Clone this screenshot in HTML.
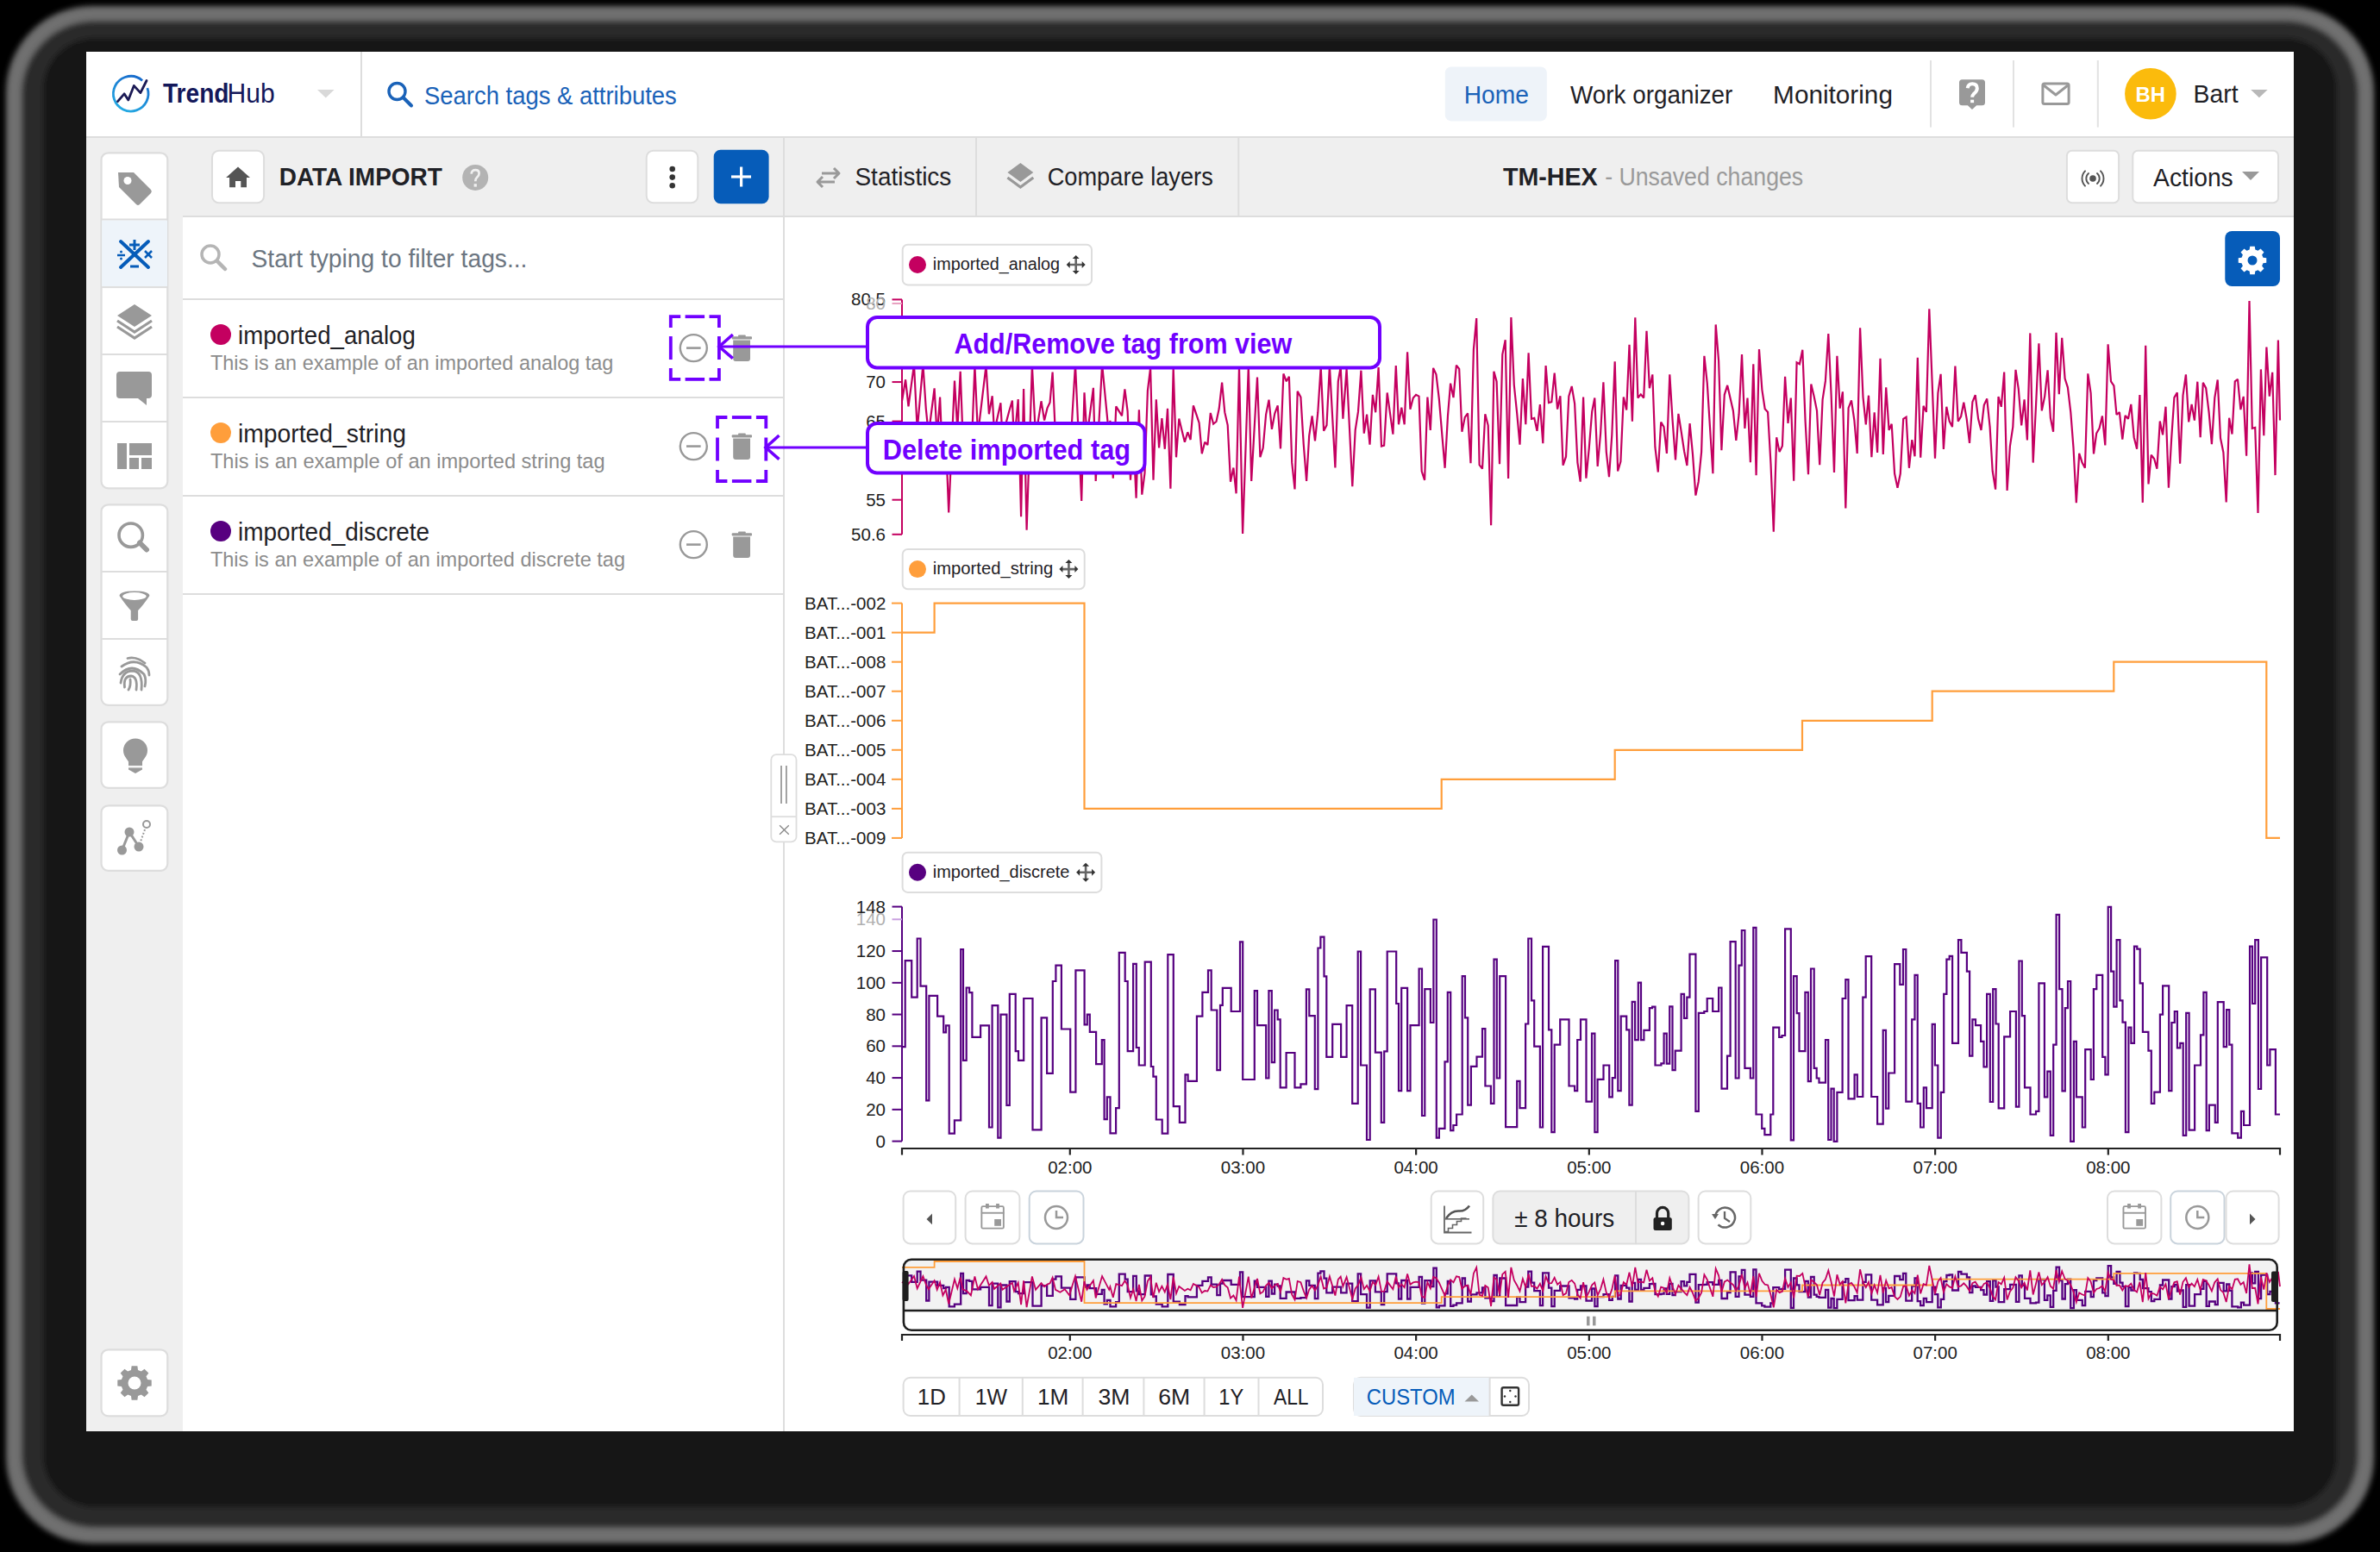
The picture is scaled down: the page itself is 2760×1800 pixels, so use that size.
<!DOCTYPE html>
<html><head><meta charset="utf-8"><title>TrendHub</title>
<style>html,body{margin:0;padding:0;background:#000;width:2760px;height:1800px;overflow:hidden}svg{display:block}</style>
</head><body><svg width="2760" height="1800" viewBox="0 0 2760 1800" font-family="&quot;Liberation Sans&quot;, sans-serif"><rect x="0.00" y="0.00" width="2760.00" height="1800.00" rx="0" fill="#000" />
<defs><filter id="blur" x="-5%" y="-5%" width="110%" height="110%"><feGaussianBlur stdDeviation="3"/></filter><linearGradient id="lg" x1="0" y1="1" x2="1" y2="0"><stop offset="0" stop-color="#27b4e6"/><stop offset="1" stop-color="#1560c8"/></linearGradient></defs>
<g filter="url(#blur)">
<rect x="7.00" y="7.00" width="2746.00" height="1783.00" rx="100" fill="#707070" />
<rect x="25.00" y="24.00" width="2710.00" height="1748.00" rx="85" fill="#2a2a2a" />
<rect x="50.00" y="44.00" width="2660.00" height="1704.00" rx="60" fill="#151515" />
</g>
<rect x="100.00" y="60.00" width="2560.00" height="1600.00" rx="0" fill="#ffffff" />
<rect x="100.00" y="158.00" width="2560.00" height="2.00" rx="0" fill="#dddddd" />
<rect x="418.00" y="60.00" width="2.00" height="98.00" rx="0" fill="#dddddd" />
<circle cx="151.7" cy="108.7" r="20.3" fill="none" stroke="url(#lg)" stroke-width="2.8" stroke-dasharray="116.2 11.3" transform="rotate(-19 151.7 108.7)"/>
<path d="M136.5,117.6 L144.1,108.8 L148.8,115.9 L155.3,99.4 L162.9,107.6 L170,93.5" fill="none" stroke="#1b1a55" stroke-width="2.8" stroke-linejoin="round" stroke-linecap="round"/>
<text x="188.92" y="119.40" font-size="31" fill="#14185a" font-weight="bold" textLength="76.59" lengthAdjust="spacingAndGlyphs" >Trend</text>
<text x="263.49" y="119.40" font-size="31" fill="#14185a" font-weight="normal" textLength="55.19" lengthAdjust="spacingAndGlyphs" >Hub</text>
<path d="M368,104 L387.6,104 L377.8,113.5 Z" fill="#d9d9d9"  />
<circle cx="460.50" cy="106.00" r="9.50" fill="none" stroke="#1a62b8" stroke-width="3.4" />
<line x1="467.50" y1="113.00" x2="477.00" y2="122.50" stroke="#1a62b8" stroke-width="4" stroke-linecap="round"/>
<text x="492.00" y="120.90" font-size="29" fill="#1a62b8" font-weight="normal" textLength="292.82" lengthAdjust="spacingAndGlyphs" >Search tags &amp; attributes</text>
<rect x="1675.80" y="77.50" width="118.00" height="62.90" rx="7" fill="#eef3f9" />
<text x="1697.75" y="120.00" font-size="29" fill="#1a62b8" font-weight="normal" textLength="75.17" lengthAdjust="spacingAndGlyphs" >Home</text>
<text x="1821.10" y="120.00" font-size="29" fill="#1f2126" font-weight="normal" textLength="188.26" lengthAdjust="spacingAndGlyphs" >Work organizer</text>
<text x="2056.12" y="120.00" font-size="29" fill="#1f2126" font-weight="normal" textLength="138.85" lengthAdjust="spacingAndGlyphs" >Monitoring</text>
<rect x="2238.00" y="70.00" width="2.00" height="77.60" rx="0" fill="#e2e2e2" />
<rect x="2334.00" y="70.00" width="2.00" height="77.60" rx="0" fill="#e2e2e2" />
<rect x="2431.80" y="70.00" width="2.00" height="77.60" rx="0" fill="#e2e2e2" />
<path d="M2275.5,92.2 h23 a3.5,3.5 0 0 1 3.5,3.5 v23 a3.5,3.5 0 0 1 -3.5,3.5 h-6.4 l-5.1,4.7 l-5.1,-4.7 h-6.4 a3.5,3.5 0 0 1 -3.5,-3.5 v-23 a3.5,3.5 0 0 1 3.5,-3.5 z" fill="#999999"  />
<path d="M2281.7,102.3 Q2282.5,97.3 2287.1,97.3 Q2292.8,97.3 2292.8,102.6 Q2292.8,105.5 2289.6,108.3 Q2287.1,110.5 2287.1,112.8" fill="none" stroke="#fff" stroke-width="4" />
<rect x="2285.10" y="115.70" width="4.00" height="3.50" rx="0" fill="#fff" />
<rect x="2368.90" y="97.10" width="30.20" height="23.40" rx="2" fill="none" stroke="#999999" stroke-width="3" />
<path d="M2370,99 L2384,110 L2398,99" fill="none" stroke="#999999" stroke-width="3" stroke-linejoin="round"/>
<circle cx="2493.90" cy="108.70" r="29.80" fill="#fbbb0c"  />
<text x="2476.57" y="117.60" font-size="24" fill="#fff" font-weight="bold" textLength="34.41" lengthAdjust="spacingAndGlyphs" >BH</text>
<text x="2543.53" y="119.00" font-size="29" fill="#1f2126" font-weight="normal" textLength="52.01" lengthAdjust="spacingAndGlyphs" >Bart</text>
<path d="M2610.2,104 L2629.6,104 L2619.9,113.2 Z" fill="#b8b8b8"  />
<rect x="100.00" y="160.00" width="112.00" height="1500.00" rx="0" fill="#efefef" />
<rect x="117.50" y="177.30" width="76.80" height="389.00" rx="8" fill="#fff" stroke="#dddddd" stroke-width="2.2" />
<rect x="118.20" y="255.50" width="75.80" height="76.60" rx="0" fill="#eef4fa" />
<rect x="118.20" y="253.50" width="75.80" height="2.00" rx="0" fill="#dddddd" />
<rect x="118.20" y="332.10" width="75.80" height="2.00" rx="0" fill="#dddddd" />
<rect x="118.20" y="410.00" width="75.80" height="2.00" rx="0" fill="#dddddd" />
<rect x="118.20" y="488.00" width="75.80" height="2.00" rx="0" fill="#dddddd" />
<rect x="117.50" y="585.30" width="76.80" height="232.50" rx="8" fill="#fff" stroke="#dddddd" stroke-width="2.2" />
<rect x="118.20" y="662.00" width="75.80" height="2.00" rx="0" fill="#dddddd" />
<rect x="118.20" y="740.00" width="75.80" height="2.00" rx="0" fill="#dddddd" />
<rect x="117.50" y="837.30" width="76.80" height="76.50" rx="8" fill="#fff" stroke="#dddddd" stroke-width="2.2" />
<rect x="117.50" y="934.30" width="76.80" height="75.50" rx="8" fill="#fff" stroke="#dddddd" stroke-width="2.2" />
<rect x="117.50" y="1565.30" width="76.80" height="77.00" rx="8" fill="#fff" stroke="#dddddd" stroke-width="2.2" />
<path d="M137,200 h18 l20,20 a3,3 0 0 1 0,4 l-13,13 a3,3 0 0 1 -4,0 l-20,-20 l-1,-17 z" fill="#999999"  />
<circle cx="148.00" cy="209.50" r="4.50" fill="#fff"  />
<line x1="140.00" y1="280.00" x2="172.00" y2="310.00" stroke="#065cb9" stroke-width="4" stroke-linecap="round"/>
<line x1="172.00" y1="280.00" x2="140.00" y2="310.00" stroke="#065cb9" stroke-width="4" stroke-linecap="round"/>
<line x1="156.00" y1="278.00" x2="156.00" y2="290.00" stroke="#065cb9" stroke-width="3" />
<line x1="150.00" y1="284.00" x2="162.00" y2="284.00" stroke="#065cb9" stroke-width="3" />
<line x1="151.00" y1="309.00" x2="161.00" y2="309.00" stroke="#065cb9" stroke-width="3" />
<line x1="136.00" y1="296.00" x2="145.00" y2="296.00" stroke="#065cb9" stroke-width="2.5" />
<circle cx="140.50" cy="292.00" r="1.50" fill="#065cb9"  />
<circle cx="140.50" cy="300.00" r="1.50" fill="#065cb9"  />
<line x1="168.00" y1="291.00" x2="176.00" y2="299.00" stroke="#065cb9" stroke-width="2.5" />
<line x1="176.00" y1="291.00" x2="168.00" y2="299.00" stroke="#065cb9" stroke-width="2.5" />
<path d="M156,353 L176,366 L156,379 L136,366 Z" fill="#999999"  />
<path d="M136,372 L156,385 L176,372" fill="none" stroke="#999999" stroke-width="3.2" />
<path d="M136,379 L156,392 L176,379" fill="none" stroke="#999999" stroke-width="3.2" />
<path d="M139,431 h33 a4,4 0 0 1 4,4 v23 a4,4 0 0 1 -4,4 h-2 v8 l-10,-8 h-21 a4,4 0 0 1 -4,-4 v-23 a4,4 0 0 1 4,-4 z" fill="#999999"  />
<rect x="136.00" y="514.00" width="11.00" height="30.00" rx="0" fill="#999999" />
<rect x="150.00" y="514.00" width="26.00" height="14.00" rx="0" fill="#999999" />
<rect x="150.00" y="531.00" width="11.00" height="13.00" rx="0" fill="#999999" />
<rect x="164.00" y="531.00" width="12.00" height="13.00" rx="0" fill="#999999" />
<circle cx="151.70" cy="620.70" r="13.70" fill="none" stroke="#999999" stroke-width="3.6" />
<line x1="162.00" y1="629.50" x2="170.00" y2="637.50" stroke="#999999" stroke-width="6" stroke-linecap="round"/>
<path d="M138.5,691 Q138.5,685.4 156,685.4 Q173.4,685.4 173.4,691 Q166,702 160.1,708 V718 a2,2 0 0 1 -2,2 h-4.4 a2,2 0 0 1 -2,-2 V708 Q146,702 138.5,691 Z" fill="#999999"  />
<ellipse cx="155.9" cy="691.5" rx="13.7" ry="4.4" fill="#fff"/>
<path d="M148,763.5 Q158,761 168,769" fill="none" stroke="#999999" stroke-width="2.8" stroke-linecap="round"/>
<path d="M141,773 Q156,762 170,774 Q173,778 173,783" fill="none" stroke="#999999" stroke-width="2.8" stroke-linecap="round"/>
<path d="M139,782 Q153,768 167,782 Q170,788 168,796" fill="none" stroke="#999999" stroke-width="2.8" stroke-linecap="round"/>
<path d="M140,792 Q142,778 154,778 Q166,779 164,800" fill="none" stroke="#999999" stroke-width="2.8" stroke-linecap="round"/>
<path d="M144.5,797 Q143,784 152,784 Q160,785 158,800" fill="none" stroke="#999999" stroke-width="2.8" stroke-linecap="round"/>
<path d="M151,788 Q152,795 149,800" fill="none" stroke="#999999" stroke-width="2.8" stroke-linecap="round"/>
<path d="M157,856.5 a14,14 0 0 1 14,14 c0,6 -4,9 -6,13 v6 h-16 v-6 c-2,-4 -6,-7 -6,-13 a14,14 0 0 1 14,-14 z" fill="#999999"  />
<path d="M149,890.5 h16 v2 l-8,4.5 l-8,-4.5 z" fill="#999999"  />
<rect x="147.00" y="888.00" width="20.00" height="1.60" rx="0" fill="#fff" />
<circle cx="141.50" cy="986.00" r="5.50" fill="#999999"  />
<circle cx="150.00" cy="965.00" r="5.50" fill="#999999"  />
<circle cx="161.00" cy="982.00" r="5.50" fill="#999999"  />
<path d="M141.5,986 L150,965 L161,982" fill="none" stroke="#999999" stroke-width="3" />
<circle cx="170.00" cy="956.00" r="4.00" fill="none" stroke="#999999" stroke-width="2" />
<path d="M162,979 L168,962" fill="none" stroke="#999999" stroke-width="2" stroke-dasharray="2 2"/>
<path d="M171.08,1599.99 L175.71,1600.62 L175.71,1607.38 L171.08,1608.01 L169.50,1611.82 L172.33,1615.55 L167.55,1620.33 L163.82,1617.50 L160.01,1619.08 L159.38,1623.71 L152.62,1623.71 L151.99,1619.08 L148.18,1617.50 L144.45,1620.33 L139.67,1615.55 L142.50,1611.82 L140.92,1608.01 L136.29,1607.38 L136.29,1600.62 L140.92,1599.99 L142.50,1596.18 L139.67,1592.45 L144.45,1587.67 L148.18,1590.50 L151.99,1588.92 L152.62,1584.29 L159.38,1584.29 L160.01,1588.92 L163.82,1590.50 L167.55,1587.67 L172.33,1592.45 L169.50,1596.18 Z" fill="#999999"  />
<circle cx="156.00" cy="1604.00" r="7.50" fill="#fff"  />
<rect x="212.00" y="160.00" width="696.00" height="91.00" rx="0" fill="#efefef" />
<rect x="212.00" y="250.00" width="696.00" height="2.00" rx="0" fill="#dddddd" />
<rect x="908.00" y="160.00" width="2.00" height="1500.00" rx="0" fill="#dddddd" />
<rect x="246.00" y="174.70" width="60.10" height="60.60" rx="8" fill="#fff" stroke="#dddddd" stroke-width="2" />
<path d="M276,193.4 L290,205.9 L286,205.9 L286,217.3 L279.3,217.3 L279.3,210 L273,210 L273,217.3 L266.1,217.3 L266.1,205.9 L262.1,205.9 Z" fill="#555"  />
<text x="323.73" y="215.10" font-size="30" fill="#1f2126" font-weight="bold" textLength="189.19" lengthAdjust="spacingAndGlyphs" >DATA IMPORT</text>
<circle cx="551.20" cy="205.90" r="15.00" fill="#b3b3b3"  />
<path d="M546.6,201.6 Q547.2,197.1 551.3,197.1 Q555.6,197.1 555.6,201 Q555.6,203.6 553.3,205.6 Q551.3,207.4 551.3,210.2" fill="none" stroke="#f0f0f0" stroke-width="2.7" />
<rect x="549.60" y="213.20" width="3.30" height="3.40" rx="0" fill="#f0f0f0" />
<rect x="749.70" y="174.70" width="59.60" height="60.60" rx="8" fill="#fff" stroke="#dddddd" stroke-width="2" />
<circle cx="779.70" cy="196.00" r="3.30" fill="#333"  />
<circle cx="779.70" cy="205.60" r="3.30" fill="#333"  />
<circle cx="779.70" cy="215.20" r="3.30" fill="#333"  />
<rect x="827.70" y="173.70" width="63.90" height="62.60" rx="8" fill="#065cb9" />
<line x1="759.60" y1="0.00" x2="0.00" y2="0.00" stroke="none" stroke-width="0" />
<line x1="848.00" y1="205.00" x2="871.00" y2="205.00" stroke="#fff" stroke-width="3.2" />
<line x1="859.60" y1="193.50" x2="859.60" y2="216.50" stroke="#fff" stroke-width="3.2" />
<circle cx="244.00" cy="295.00" r="10.00" fill="none" stroke="#b5b5b5" stroke-width="3.5" />
<line x1="251.50" y1="302.50" x2="261.00" y2="312.00" stroke="#b5b5b5" stroke-width="4.5" stroke-linecap="round"/>
<text x="291.47" y="310.40" font-size="29" fill="#6c7681" font-weight="normal" textLength="320.01" lengthAdjust="spacingAndGlyphs" >Start typing to filter tags...</text>
<rect x="212.00" y="346.00" width="696.00" height="2.00" rx="0" fill="#dddddd" />
<circle cx="256.00" cy="388.00" r="12.00" fill="#c40060"  />
<text x="276.04" y="399.30" font-size="29" fill="#1f2126" font-weight="normal" textLength="205.81" lengthAdjust="spacingAndGlyphs" >imported_analog</text>
<text x="243.93" y="429.00" font-size="24.5" fill="#8c8c8c" font-weight="normal" textLength="467.38" lengthAdjust="spacingAndGlyphs" >This is an example of an imported analog tag</text>
<circle cx="804.30" cy="403.60" r="15.50" fill="none" stroke="#999999" stroke-width="2.4" />
<line x1="796.00" y1="403.60" x2="812.60" y2="403.60" stroke="#999999" stroke-width="2.6" />
<rect x="848.70" y="390.20" width="23.30" height="3.40" rx="1" fill="#999999" />
<rect x="856.00" y="388.60" width="8.80" height="2.40" rx="1" fill="#999999" />
<path d="M850.2,394.6 h19.8 v21.5 a3,3 0 0 1 -3,3 h-13.8 a3,3 0 0 1 -3,-3 z" fill="#999999"  />
<rect x="212.00" y="460.00" width="696.00" height="2.00" rx="0" fill="#dddddd" />
<circle cx="256.00" cy="502.00" r="12.00" fill="#ff9e3b"  />
<text x="276.00" y="513.30" font-size="29" fill="#1f2126" font-weight="normal" textLength="194.99" lengthAdjust="spacingAndGlyphs" >imported_string</text>
<text x="243.93" y="543.00" font-size="24.5" fill="#8c8c8c" font-weight="normal" textLength="457.70" lengthAdjust="spacingAndGlyphs" >This is an example of an imported string tag</text>
<circle cx="804.30" cy="517.60" r="15.50" fill="none" stroke="#999999" stroke-width="2.4" />
<line x1="796.00" y1="517.60" x2="812.60" y2="517.60" stroke="#999999" stroke-width="2.6" />
<rect x="848.70" y="504.20" width="23.30" height="3.40" rx="1" fill="#999999" />
<rect x="856.00" y="502.60" width="8.80" height="2.40" rx="1" fill="#999999" />
<path d="M850.2,508.6 h19.8 v21.5 a3,3 0 0 1 -3,3 h-13.8 a3,3 0 0 1 -3,-3 z" fill="#999999"  />
<rect x="212.00" y="574.00" width="696.00" height="2.00" rx="0" fill="#dddddd" />
<circle cx="256.00" cy="616.00" r="12.00" fill="#580080"  />
<text x="276.02" y="627.30" font-size="29" fill="#1f2126" font-weight="normal" textLength="221.99" lengthAdjust="spacingAndGlyphs" >imported_discrete</text>
<text x="243.93" y="657.00" font-size="24.5" fill="#8c8c8c" font-weight="normal" textLength="481.09" lengthAdjust="spacingAndGlyphs" >This is an example of an imported discrete tag</text>
<circle cx="804.30" cy="631.60" r="15.50" fill="none" stroke="#999999" stroke-width="2.4" />
<line x1="796.00" y1="631.60" x2="812.60" y2="631.60" stroke="#999999" stroke-width="2.6" />
<rect x="848.70" y="618.20" width="23.30" height="3.40" rx="1" fill="#999999" />
<rect x="856.00" y="616.60" width="8.80" height="2.40" rx="1" fill="#999999" />
<path d="M850.2,622.6 h19.8 v21.5 a3,3 0 0 1 -3,3 h-13.8 a3,3 0 0 1 -3,-3 z" fill="#999999"  />
<rect x="212.00" y="688.00" width="696.00" height="2.00" rx="0" fill="#dddddd" />
<rect x="910.00" y="160.00" width="1750.00" height="91.00" rx="0" fill="#efefef" />
<rect x="910.00" y="250.00" width="1750.00" height="2.00" rx="0" fill="#dddddd" />
<rect x="1131.00" y="160.00" width="2.00" height="90.00" rx="0" fill="#dddddd" />
<rect x="1435.30" y="160.00" width="2.00" height="90.00" rx="0" fill="#dddddd" />
<path d="M953,201 h20 M967,195 l6,6 l-6,6" fill="none" stroke="#999999" stroke-width="3" stroke-linejoin="round"/>
<path d="M968,211 h-20 M954,205 l-6,6 l6,6" fill="none" stroke="#999999" stroke-width="3" stroke-linejoin="round"/>
<text x="991.48" y="215.30" font-size="29" fill="#1f2126" font-weight="normal" textLength="111.86" lengthAdjust="spacingAndGlyphs" >Statistics</text>
<path d="M1183.4,189 L1198.3,200 L1183.4,211 L1168.4,200 Z" fill="#999999"  />
<path d="M1168.4,206 L1183.4,217 L1198.3,206" fill="none" stroke="#999999" stroke-width="3.2" />
<text x="1214.64" y="215.30" font-size="29" fill="#1f2126" font-weight="normal" textLength="192.18" lengthAdjust="spacingAndGlyphs" >Compare layers</text>
<text x="1742.91" y="214.90" font-size="30" fill="#1f2126" font-weight="bold" textLength="109.79" lengthAdjust="spacingAndGlyphs" >TM-HEX</text>
<text x="1861.13" y="214.90" font-size="29" fill="#9a9a9a" font-weight="normal" textLength="230.07" lengthAdjust="spacingAndGlyphs" >- Unsaved changes</text>
<rect x="2396.90" y="174.70" width="60.20" height="60.60" rx="6" fill="#fff" stroke="#dddddd" stroke-width="2" />
<circle cx="2427.00" cy="207.00" r="3.80" fill="#555"  />
<path d="M2422.05,201.10 A7.7,7.7 0 0 0 2422.05,212.90" fill="none" stroke="#555" stroke-width="1.9" stroke-linecap="round"/>
<path d="M2431.95,201.10 A7.7,7.7 0 0 1 2431.95,212.90" fill="none" stroke="#555" stroke-width="1.9" stroke-linecap="round"/>
<path d="M2418.01,198.32 A12.5,12.5 0 0 0 2418.01,215.68" fill="none" stroke="#555" stroke-width="1.9" stroke-linecap="round"/>
<path d="M2435.99,198.32 A12.5,12.5 0 0 1 2435.99,215.68" fill="none" stroke="#555" stroke-width="1.9" stroke-linecap="round"/>
<rect x="2473.30" y="174.70" width="168.70" height="60.60" rx="6" fill="#fff" stroke="#dddddd" stroke-width="2" />
<text x="2497.10" y="215.80" font-size="29" fill="#1f2126" font-weight="normal" textLength="92.65" lengthAdjust="spacingAndGlyphs" >Actions</text>
<path d="M2600,199 L2620,199 L2610,209 Z" fill="#999"  />
<rect x="2580.30" y="268.00" width="63.70" height="64.00" rx="8" fill="#065cb9" />
<path d="M2624.44,298.69 L2628.26,299.21 L2628.26,304.79 L2624.44,305.31 L2623.13,308.46 L2625.47,311.53 L2621.53,315.47 L2618.46,313.13 L2615.31,314.44 L2614.79,318.26 L2609.21,318.26 L2608.69,314.44 L2605.54,313.13 L2602.47,315.47 L2598.53,311.53 L2600.87,308.46 L2599.56,305.31 L2595.74,304.79 L2595.74,299.21 L2599.56,298.69 L2600.87,295.54 L2598.53,292.47 L2602.47,288.53 L2605.54,290.87 L2608.69,289.56 L2609.21,285.74 L2614.79,285.74 L2615.31,289.56 L2618.46,290.87 L2621.53,288.53 L2625.47,292.47 L2623.13,295.54 Z" fill="#fff"  />
<circle cx="2612.00" cy="302.00" r="5.50" fill="#065cb9"  />
<rect x="1046.70" y="283.70" width="219.30" height="46.70" rx="6" fill="#fff" stroke="#dddddd" stroke-width="2" />
<circle cx="1064.00" cy="307.05" r="10.00" fill="#c40060"  />
<text x="1081.81" y="313.05" font-size="20.5" fill="#1f2126" font-weight="normal" textLength="147.30" lengthAdjust="spacingAndGlyphs" >imported_analog</text>
<path d="M1238.7,307.04999999999995 h18 M1247.7,298.04999999999995 v18" fill="none" stroke="#666" stroke-width="2.6" />
<path d="M1236.7,307.04999999999995 l4,-4 v8 z M1258.7,307.04999999999995 l-4,-4 v8 z M1247.7,296.04999999999995 l-4,4 h8 z M1247.7,318.04999999999995 l-4,-4 h8 z" fill="#333"  />
<rect x="1046.70" y="637.00" width="211.00" height="46.20" rx="6" fill="#fff" stroke="#dddddd" stroke-width="2" />
<circle cx="1064.00" cy="660.10" r="10.00" fill="#ff9e3b"  />
<text x="1081.79" y="666.10" font-size="20.5" fill="#1f2126" font-weight="normal" textLength="139.35" lengthAdjust="spacingAndGlyphs" >imported_string</text>
<path d="M1230.4,660.1 h18 M1239.4,651.1 v18" fill="none" stroke="#666" stroke-width="2.6" />
<path d="M1228.4,660.1 l4,-4 v8 z M1250.4,660.1 l-4,-4 v8 z M1239.4,649.1 l-4,4 h8 z M1239.4,671.1 l-4,-4 h8 z" fill="#333"  />
<rect x="1046.60" y="988.70" width="230.80" height="46.20" rx="6" fill="#fff" stroke="#dddddd" stroke-width="2" />
<circle cx="1064.00" cy="1011.80" r="10.00" fill="#580080"  />
<text x="1081.80" y="1017.80" font-size="20.5" fill="#1f2126" font-weight="normal" textLength="158.62" lengthAdjust="spacingAndGlyphs" >imported_discrete</text>
<path d="M1250.1000000000001,1011.8000000000001 h18 M1259.1000000000001,1002.8000000000001 v18" fill="none" stroke="#666" stroke-width="2.6" />
<path d="M1248.1000000000001,1011.8000000000001 l4,-4 v8 z M1270.1000000000001,1011.8000000000001 l-4,-4 v8 z M1259.1000000000001,1000.8000000000001 l-4,4 h8 z M1259.1000000000001,1022.8000000000001 l-4,-4 h8 z" fill="#333"  />
<line x1="1046.00" y1="347.40" x2="1046.00" y2="619.80" stroke="#c40060" stroke-width="2" />
<line x1="1034.50" y1="347.40" x2="1046.00" y2="347.40" stroke="#c40060" stroke-width="2" />
<text x="1027.00" y="354.40" font-size="20.5" fill="#222" font-weight="normal" text-anchor="end" >80.5</text>
<line x1="1034.50" y1="351.95" x2="1046.00" y2="351.95" stroke="#e8a0c0" stroke-width="2" />
<text x="1027.00" y="358.95" font-size="20.5" fill="#b0b0b0" font-weight="normal" text-anchor="end" >80</text>
<line x1="1034.50" y1="443.05" x2="1046.00" y2="443.05" stroke="#c40060" stroke-width="2" />
<text x="1027.00" y="450.05" font-size="20.5" fill="#222" font-weight="normal" text-anchor="end" >70</text>
<line x1="1034.50" y1="488.60" x2="1046.00" y2="488.60" stroke="#c40060" stroke-width="2" />
<text x="1027.00" y="495.60" font-size="20.5" fill="#222" font-weight="normal" text-anchor="end" >65</text>
<line x1="1034.50" y1="534.15" x2="1046.00" y2="534.15" stroke="#c40060" stroke-width="2" />
<text x="1027.00" y="541.15" font-size="20.5" fill="#222" font-weight="normal" text-anchor="end" >60</text>
<line x1="1034.50" y1="397.50" x2="1046.00" y2="397.50" stroke="#c40060" stroke-width="2" />
<text x="1027.00" y="404.50" font-size="20.5" fill="#222" font-weight="normal" text-anchor="end" >75</text>
<line x1="1034.50" y1="579.70" x2="1046.00" y2="579.70" stroke="#c40060" stroke-width="2" />
<text x="1027.00" y="586.70" font-size="20.5" fill="#222" font-weight="normal" text-anchor="end" >55</text>
<line x1="1034.50" y1="619.79" x2="1046.00" y2="619.79" stroke="#c40060" stroke-width="2" />
<text x="1027.00" y="626.79" font-size="20.5" fill="#222" font-weight="normal" text-anchor="end" >50.6</text>
<path d="M1046.1,464.6 L1050.1,440.3 L1053.5,471.4 L1060.0,422.7 L1063.7,498.5 L1070.4,422.7 L1073.8,474.1 L1076.8,503.9 L1083.6,450.4 L1086.7,506.6 L1090.1,460.6 L1093.4,541.8 L1096.8,506.6 L1100.2,594.5 L1107.0,441.6 L1110.3,498.5 L1113.7,430.8 L1116.4,503.9 L1121.2,514.7 L1125.9,541.8 L1130.4,424.1 L1134.0,503.9 L1143.5,424.1 L1146.9,480.2 L1150.7,459.2 L1153.0,501.2 L1160.4,467.3 L1162.4,506.6 L1170.3,476.8 L1173.9,464.6 L1176.0,514.7 L1180.7,463.0 L1184.1,599.2 L1187.1,451.1 L1190.6,614.8 L1196.9,424.1 L1201.0,506.6 L1207.5,465.3 L1211.1,487.6 L1214.5,473.4 L1217.6,466.7 L1220.6,431.5 L1224.0,506.6 L1229.4,522.8 L1234.8,503.9 L1240.2,541.8 L1243.6,479.5 L1247.0,422.7 L1254.2,581.0 L1257.5,455.2 L1260.5,506.6 L1267.9,449.8 L1270.7,558.0 L1278.1,422.7 L1286.2,506.6 L1287.4,487.7 L1290.8,554.7 L1294.3,471.4 L1297.7,476.8 L1301.0,482.3 L1304.4,451.4 L1307.6,476.8 L1311.0,556.7 L1314.2,503.9 L1317.6,577.7 L1320.9,475.2 L1324.3,573.6 L1327.5,548.6 L1330.9,453.2 L1334.1,426.8 L1337.5,556.7 L1340.8,463.3 L1344.1,519.5 L1347.4,485.2 L1350.8,520.8 L1354.0,473.7 L1357.4,566.8 L1360.7,426.8 L1364.0,530.3 L1367.3,485.6 L1370.7,499.8 L1373.9,512.7 L1377.3,501.2 L1380.6,510.0 L1383.9,470.3 L1387.2,480.2 L1390.6,490.4 L1393.8,526.2 L1397.2,512.7 L1400.4,516.1 L1403.8,478.9 L1407.1,491.7 L1410.5,489.0 L1413.7,474.1 L1417.1,443.7 L1420.3,478.2 L1423.7,493.1 L1427.0,558.7 L1430.4,542.5 L1433.6,572.3 L1437.0,425.4 L1441.1,618.9 L1447.8,425.4 L1451.2,558.0 L1458.0,437.6 L1461.4,530.3 L1464.7,519.5 L1468.1,480.9 L1471.5,463.6 L1474.9,497.8 L1478.3,479.5 L1481.7,470.3 L1485.0,520.4 L1488.4,433.5 L1491.8,442.3 L1494.9,436.9 L1498.2,536.4 L1501.5,567.5 L1504.7,453.8 L1508.4,460.6 L1511.7,514.7 L1515.1,558.0 L1518.2,505.3 L1521.6,482.5 L1525.0,511.4 L1528.3,478.2 L1531.7,425.4 L1535.1,499.8 L1538.5,493.1 L1541.9,424.1 L1548.4,542.5 L1551.8,442.3 L1554.7,425.4 L1557.4,485.6 L1561.6,427.9 L1568.3,564.3 L1571.7,498.9 L1575.0,477.4 L1578.4,429.7 L1581.8,502.6 L1585.1,480.6 L1588.5,515.7 L1591.9,457.8 L1595.2,478.3 L1598.6,426.0 L1602.0,517.6 L1605.1,516.6 L1608.7,455.5 L1612.1,480.2 L1615.4,503.6 L1618.8,424.1 L1622.0,492.3 L1625.3,472.7 L1628.7,492.3 L1632.1,408.2 L1635.4,474.6 L1638.8,461.5 L1642.1,457.8 L1645.5,459.6 L1648.7,546.5 L1652.1,556.8 L1655.4,460.6 L1658.8,498.9 L1662.1,426.9 L1665.5,434.4 L1668.9,463.4 L1672.2,502.6 L1675.6,542.8 L1679.0,482.1 L1682.1,444.7 L1685.5,461.1 L1688.9,423.7 L1692.2,427.9 L1695.4,500.7 L1698.8,483.9 L1702.1,479.3 L1705.5,537.2 L1708.9,405.4 L1712.2,369.0 L1715.6,539.1 L1719.0,543.7 L1722.3,480.2 L1725.7,493.3 L1729.1,609.2 L1732.4,430.7 L1735.6,442.4 L1739.0,538.1 L1742.3,411.0 L1745.7,394.2 L1749.1,555.0 L1752.4,368.0 L1755.8,446.5 L1759.2,479.3 L1762.5,515.7 L1765.9,439.1 L1769.3,492.3 L1772.6,409.2 L1776.0,485.8 L1779.3,484.9 L1782.5,499.8 L1785.9,469.0 L1789.3,514.2 L1792.6,424.1 L1796.0,467.1 L1799.3,466.2 L1802.7,432.5 L1806.1,474.6 L1809.4,459.3 L1812.6,539.6 L1816.0,529.7 L1819.3,459.6 L1822.7,448.0 L1826.1,468.0 L1829.4,536.3 L1832.7,558.7 L1836.1,460.6 L1839.4,554.6 L1842.8,519.4 L1846.2,477.4 L1849.3,461.5 L1852.7,540.9 L1856.1,502.6 L1859.4,443.2 L1862.8,524.1 L1866.0,553.1 L1869.3,504.5 L1872.7,419.4 L1876.1,546.5 L1879.4,535.3 L1882.8,460.6 L1886.2,475.5 L1889.5,399.8 L1892.9,488.6 L1896.3,368.4 L1899.4,461.5 L1902.8,457.4 L1906.2,461.5 L1909.5,383.9 L1912.9,450.3 L1916.3,434.4 L1919.4,518.5 L1922.8,547.5 L1926.2,489.5 L1929.5,495.1 L1932.9,526.0 L1936.3,434.4 L1939.6,487.7 L1943.0,533.5 L1946.4,479.8 L1949.7,500.7 L1953.1,523.2 L1956.4,540.0 L1959.6,491.0 L1963.0,526.9 L1966.4,574.6 L1969.7,558.7 L1973.1,524.1 L1976.4,412.9 L1979.8,444.7 L1983.2,498.9 L1986.4,549.3 L1989.7,376.4 L1993.1,418.5 L1996.4,522.2 L1999.8,457.8 L2003.2,446.9 L2006.5,461.5 L2009.9,476.4 L2013.3,511.0 L2016.6,480.2 L2020.0,411.0 L2023.4,497.0 L2026.5,461.5 L2029.9,536.3 L2033.3,422.2 L2036.6,551.2 L2040.0,405.0 L2043.4,452.1 L2046.7,474.2 L2050.1,477.9 L2053.5,538.1 L2056.8,616.6 L2060.2,507.3 L2063.6,524.1 L2066.9,517.2 L2070.1,436.8 L2073.5,491.0 L2076.8,461.5 L2080.2,557.8 L2083.6,420.4 L2086.9,422.2 L2090.3,405.8 L2093.6,488.6 L2097.0,550.3 L2100.3,445.6 L2103.6,459.6 L2107.0,476.4 L2110.2,539.1 L2113.6,463.4 L2116.9,441.9 L2120.3,387.1 L2123.6,457.8 L2127.0,548.0 L2130.4,412.9 L2133.7,473.6 L2136.9,454.4 L2140.3,589.5 L2143.6,473.1 L2147.0,464.3 L2150.4,487.7 L2153.7,526.0 L2157.1,380.2 L2160.5,460.6 L2163.8,492.3 L2167.0,458.7 L2170.4,530.3 L2173.7,478.3 L2177.1,525.0 L2180.5,415.7 L2183.8,526.9 L2187.2,449.3 L2190.6,498.9 L2193.7,491.8 L2197.1,549.3 L2200.5,565.8 L2203.8,549.3 L2207.2,485.8 L2210.6,483.6 L2213.9,542.8 L2217.3,510.1 L2220.5,529.2 L2223.8,414.8 L2227.2,530.7 L2230.6,470.8 L2233.9,477.9 L2237.3,358.3 L2240.7,444.7 L2244.0,531.6 L2247.4,455.9 L2250.6,433.8 L2253.9,520.9 L2257.3,471.8 L2260.7,488.6 L2264.0,495.1 L2267.4,424.5 L2270.7,488.6 L2274.1,483.0 L2277.3,466.7 L2280.7,485.8 L2284.0,513.8 L2287.4,466.2 L2290.7,458.1 L2294.1,485.8 L2297.5,498.9 L2300.8,469.9 L2304.2,462.4 L2307.6,495.1 L2310.7,546.5 L2314.1,567.7 L2317.5,460.0 L2320.8,471.8 L2324.2,431.6 L2327.6,569.0 L2330.9,517.6 L2334.3,495.1 L2337.5,428.8 L2340.8,451.2 L2344.2,493.3 L2347.6,463.4 L2350.9,510.5 L2354.3,386.4 L2357.7,536.6 L2361.0,470.8 L2364.4,398.3 L2367.8,476.4 L2371.2,459.6 L2374.6,429.3 L2377.9,484.8 L2381.1,500.7 L2384.5,385.8 L2387.8,457.3 L2391.2,391.9 L2394.6,439.0 L2397.9,449.3 L2401.3,478.2 L2404.5,519.3 L2407.8,583.2 L2411.2,525.9 L2414.5,536.2 L2417.9,542.7 L2421.3,433.4 L2424.6,455.8 L2428.0,526.4 L2431.2,502.5 L2434.5,496.9 L2437.9,482.4 L2441.3,516.5 L2444.6,399.4 L2448.0,442.4 L2451.4,447.4 L2454.5,481.0 L2457.9,478.2 L2461.3,509.6 L2464.6,482.0 L2468.0,485.7 L2471.3,468.9 L2474.7,507.2 L2478.1,520.8 L2481.4,458.1 L2484.8,582.9 L2488.2,400.7 L2491.5,561.4 L2494.7,527.7 L2498.1,532.0 L2501.4,543.6 L2504.8,488.5 L2508.1,504.4 L2511.5,471.7 L2514.9,565.7 L2518.2,508.1 L2521.4,461.1 L2524.8,455.4 L2528.1,537.6 L2531.5,458.6 L2534.9,434.3 L2538.2,489.4 L2541.6,468.9 L2544.9,487.6 L2548.3,442.7 L2551.7,507.2 L2554.8,443.7 L2558.2,450.2 L2561.6,478.2 L2564.9,515.2 L2568.3,461.4 L2571.7,440.5 L2575.0,508.1 L2578.4,524.9 L2581.7,582.5 L2585.1,484.8 L2588.5,503.5 L2591.8,442.4 L2595.0,439.9 L2598.4,475.1 L2601.7,459.9 L2605.1,528.7 L2608.5,349.0 L2611.8,496.9 L2615.2,496.0 L2618.5,595.0 L2621.9,428.4 L2625.3,505.3 L2628.4,402.6 L2631.8,459.6 L2635.2,431.9 L2638.5,551.1 L2641.9,394.5 L2644.0,487.6" fill="none" stroke="#c40060" stroke-width="2.2" stroke-linejoin="miter" stroke-miterlimit="2"/>
<line x1="1046.00" y1="699.60" x2="1046.00" y2="971.90" stroke="#ff9e3b" stroke-width="2" />
<line x1="1034.00" y1="699.60" x2="1046.00" y2="699.60" stroke="#ff9e3b" stroke-width="2" />
<text x="1027.30" y="706.60" font-size="20.5" fill="#222" font-weight="normal" text-anchor="end" >BAT...-002</text>
<line x1="1034.00" y1="733.64" x2="1046.00" y2="733.64" stroke="#ff9e3b" stroke-width="2" />
<text x="1027.30" y="740.64" font-size="20.5" fill="#222" font-weight="normal" text-anchor="end" >BAT...-001</text>
<line x1="1034.00" y1="767.68" x2="1046.00" y2="767.68" stroke="#ff9e3b" stroke-width="2" />
<text x="1027.30" y="774.68" font-size="20.5" fill="#222" font-weight="normal" text-anchor="end" >BAT...-008</text>
<line x1="1034.00" y1="801.72" x2="1046.00" y2="801.72" stroke="#ff9e3b" stroke-width="2" />
<text x="1027.30" y="808.72" font-size="20.5" fill="#222" font-weight="normal" text-anchor="end" >BAT...-007</text>
<line x1="1034.00" y1="835.76" x2="1046.00" y2="835.76" stroke="#ff9e3b" stroke-width="2" />
<text x="1027.30" y="842.76" font-size="20.5" fill="#222" font-weight="normal" text-anchor="end" >BAT...-006</text>
<line x1="1034.00" y1="869.80" x2="1046.00" y2="869.80" stroke="#ff9e3b" stroke-width="2" />
<text x="1027.30" y="876.80" font-size="20.5" fill="#222" font-weight="normal" text-anchor="end" >BAT...-005</text>
<line x1="1034.00" y1="903.84" x2="1046.00" y2="903.84" stroke="#ff9e3b" stroke-width="2" />
<text x="1027.30" y="910.84" font-size="20.5" fill="#222" font-weight="normal" text-anchor="end" >BAT...-004</text>
<line x1="1034.00" y1="937.88" x2="1046.00" y2="937.88" stroke="#ff9e3b" stroke-width="2" />
<text x="1027.30" y="944.88" font-size="20.5" fill="#222" font-weight="normal" text-anchor="end" >BAT...-003</text>
<line x1="1034.00" y1="971.92" x2="1046.00" y2="971.92" stroke="#ff9e3b" stroke-width="2" />
<text x="1027.30" y="978.92" font-size="20.5" fill="#222" font-weight="normal" text-anchor="end" >BAT...-009</text>
<path d="M1046.0,733.6 L1083.6,733.6 L1083.6,699.6 L1257.5,699.6 L1257.5,937.9 L1671.7,937.9 L1671.7,903.8 L1872.7,903.8 L1872.7,869.8 L2090.0,869.8 L2090.0,835.8 L2240.7,835.8 L2240.7,801.7 L2451.3,801.7 L2451.3,767.7 L2628.3,767.7 L2628.3,971.9 L2644.0,971.9" fill="none" stroke="#ff9e3b" stroke-width="2.2" />
<line x1="1046.00" y1="1051.60" x2="1046.00" y2="1323.60" stroke="#560080" stroke-width="2" />
<line x1="1034.50" y1="1051.58" x2="1046.00" y2="1051.58" stroke="#560080" stroke-width="2" />
<text x="1027.00" y="1058.58" font-size="20.5" fill="#222" font-weight="normal" text-anchor="end" >148</text>
<line x1="1034.50" y1="1066.28" x2="1046.00" y2="1066.28" stroke="#c9a0e0" stroke-width="2" />
<text x="1027.00" y="1073.28" font-size="20.5" fill="#b0b0b0" font-weight="normal" text-anchor="end" >140</text>
<line x1="1034.50" y1="1103.04" x2="1046.00" y2="1103.04" stroke="#560080" stroke-width="2" />
<text x="1027.00" y="1110.04" font-size="20.5" fill="#222" font-weight="normal" text-anchor="end" >120</text>
<line x1="1034.50" y1="1139.80" x2="1046.00" y2="1139.80" stroke="#560080" stroke-width="2" />
<text x="1027.00" y="1146.80" font-size="20.5" fill="#222" font-weight="normal" text-anchor="end" >100</text>
<line x1="1034.50" y1="1176.56" x2="1046.00" y2="1176.56" stroke="#560080" stroke-width="2" />
<text x="1027.00" y="1183.56" font-size="20.5" fill="#222" font-weight="normal" text-anchor="end" >80</text>
<line x1="1034.50" y1="1213.32" x2="1046.00" y2="1213.32" stroke="#560080" stroke-width="2" />
<text x="1027.00" y="1220.32" font-size="20.5" fill="#222" font-weight="normal" text-anchor="end" >60</text>
<line x1="1034.50" y1="1250.08" x2="1046.00" y2="1250.08" stroke="#560080" stroke-width="2" />
<text x="1027.00" y="1257.08" font-size="20.5" fill="#222" font-weight="normal" text-anchor="end" >40</text>
<line x1="1034.50" y1="1286.84" x2="1046.00" y2="1286.84" stroke="#560080" stroke-width="2" />
<text x="1027.00" y="1293.84" font-size="20.5" fill="#222" font-weight="normal" text-anchor="end" >20</text>
<line x1="1034.50" y1="1323.60" x2="1046.00" y2="1323.60" stroke="#560080" stroke-width="2" />
<text x="1027.00" y="1330.60" font-size="20.5" fill="#222" font-weight="normal" text-anchor="end" >0</text>
<path d="M1046,1214.1 H1049.7 V1114.1 H1057.2 V1156.7 H1063.7 V1088.5 H1067.5 V1143.6 H1074.2 V1276.3 H1077.4 V1154.8 H1087.1 V1178.6 H1094.2 V1197.3 H1097.0 V1189.4 H1100.7 V1314.6 H1106.9 V1299.4 H1114.2 V1101.0 H1117.0 V1229.9 H1120.7 V1145.5 H1124.1 V1151.1 H1127.4 V1202.9 H1137.1 V1189.4 H1147.0 V1307.5 H1150.6 V1166.1 H1157.3 V1319.6 H1160.5 V1176.7 H1167.4 V1281.9 H1170.8 V1152.8 H1177.7 V1219.1 H1181.0 V1229.9 H1187.2 V1158.0 H1197.5 V1310.3 H1207.6 V1180.4 H1214.1 V1244.9 H1220.8 V1138.0 H1224.4 V1119.7 H1230.9 V1193.5 H1241.2 V1266.7 H1247.4 V1125.3 H1257.6 V1188.3 H1260.8 V1176.7 H1263.8 V1196.9 H1271.1 V1234.1 H1277.8 V1206.2 H1280.6 V1298.1 H1283.8 V1272.3 H1287.5 V1314.4 H1294.1 V1285.1 H1297.8 V1104.8 H1304.7 V1138.0 H1307.7 V1219.1 H1314.1 V1117.9 H1317.8 V1215.0 H1320.8 V1235.5 H1327.7 V1115.6 H1334.8 V1237.0 H1337.4 V1248.6 H1340.8 V1298.5 H1347.7 V1314.6 H1354.3 V1107.2 H1360.8 V1283.2 H1367.9 V1301.9 H1374.5 V1246.4 H1377.6 V1253.9 H1387.9 V1178.6 H1394.4 V1150.9 H1401.0 V1125.3 H1404.7 V1171.5 H1411.3 V1241.2 H1415.0 V1165.9 H1417.8 V1145.9 H1427.7 V1173.0 H1438.0 V1092.3 H1441.2 V1252.0 H1454.8 V1149.2 H1458.0 V1189.2 H1468.2 V1250.5 H1471.4 V1149.2 H1474.8 V1232.2 H1478.1 V1171.5 H1481.7 V1182.3 H1484.7 V1261.3 H1491.6 V1221.0 H1501.5 V1261.3 H1508.4 V1257.4 H1514.9 V1147.4 H1518.3 V1178.2 H1524.8 V1263.2 H1528.4 V1099.5 H1531.4 V1086.7 H1535.5 V1132.4 H1538.3 V1225.8 H1545.2 V1187.9 H1555.1 V1225.8 H1561.6 V1166.1 H1568.2 V1279.8 H1574.7 V1103.5 H1578.1 V1235.5 H1585.0 V1322.0 H1588.7 V1147.4 H1594.9 V1220.6 H1601.8 V1301.9 H1605.2 V1219.3 H1608.7 V1103.5 H1619.2 V1164.0 H1622.0 V1265.1 H1625.2 V1145.9 H1632.1 V1265.1 H1635.5 V1189.2 H1645.6 V1123.5 H1649.0 V1294.0 H1652.3 V1147.2 H1658.9 V1186.0 H1662.4 V1066.5 H1665.8 V1319.6 H1668.9 V1308.8 H1675.5 V1231.3 H1678.8 V1150.9 H1682.2 V1311.2 H1685.4 V1305.0 H1689.1 V1292.5 H1695.7 V1132.2 H1699.0 V1180.4 H1702.2 V1281.7 H1705.9 V1236.9 H1712.5 V1225.6 H1719.0 V1193.1 H1722.4 V1259.5 H1728.9 V1279.8 H1732.5 V1112.6 H1735.8 V1250.5 H1739.2 V1132.2 H1746.1 V1307.1 H1759.2 V1253.9 H1762.5 V1285.1 H1769.1 V1187.5 H1772.3 V1088.5 H1776.0 V1160.3 H1779.2 V1213.7 H1785.9 V1307.5 H1789.1 V1097.9 H1796.0 V1194.4 H1799.3 V1313.1 H1802.7 V1211.6 H1809.2 V1182.3 H1819.5 V1259.5 H1826.1 V1265.1 H1829.2 V1206.0 H1833.0 V1182.3 H1839.5 V1277.6 H1846.0 V1198.7 H1849.4 V1313.1 H1852.6 V1251.8 H1859.5 V1235.5 H1866.2 V1272.3 H1869.8 V1250.1 H1873.1 V1114.1 H1876.3 V1265.1 H1879.7 V1178.6 H1886.2 V1194.4 H1889.4 V1281.7 H1892.7 V1161.8 H1896.1 V1206.2 H1899.8 V1139.7 H1903.0 V1206.2 H1906.4 V1194.8 H1912.9 V1169.2 H1916.1 V1167.7 H1919.5 V1235.5 H1926.4 V1233.3 H1929.6 V1198.7 H1932.8 V1233.7 H1936.2 V1167.4 H1939.5 V1241.2 H1942.7 V1218.7 H1949.6 V1152.8 H1953.0 V1180.8 H1956.3 V1156.7 H1959.5 V1106.6 H1966.4 V1288.8 H1969.8 V1174.8 H1976.3 V1173.0 H1979.7 V1158.0 H1986.2 V1173.0 H1993.1 V1145.5 H1996.5 V1262.6 H2003.0 V1224.7 H2006.6 V1092.1 H2012.7 V1250.5 H2016.5 V1119.7 H2019.8 V1079.0 H2023.4 V1238.9 H2029.9 V1250.5 H2033.3 V1075.8 H2036.5 V1292.5 H2043.2 V1308.8 H2046.4 V1316.2 H2053.3 V1292.5 H2056.3 V1191.6 H2063.2 V1202.9 H2066.5 V1201.0 H2070.1 V1077.3 H2076.8 V1322.4 H2080.0 V1132.2 H2083.7 V1175.2 H2086.5 V1219.1 H2093.4 V1150.9 H2096.8 V1254.2 H2100.0 V1123.5 H2103.7 V1238.9 H2106.7 V1250.5 H2109.5 V1255.7 H2117.0 V1206.0 H2120.2 V1322.0 H2123.5 V1262.6 H2126.7 V1323.9 H2130.4 V1266.9 H2136.6 V1158.0 H2140.3 V1136.2 H2143.5 V1274.4 H2150.6 V1246.4 H2153.8 V1272.0 H2160.3 V1156.7 H2163.7 V1109.1 H2170.2 V1272.0 H2177.1 V1303.7 H2183.7 V1194.8 H2187.0 V1285.6 H2190.2 V1244.5 H2197.1 V1118.2 H2203.3 V1141.8 H2207.0 V1101.0 H2210.3 V1277.6 H2217.2 V1182.3 H2220.5 V1130.9 H2223.7 V1279.8 H2227.1 V1307.5 H2230.8 V1261.3 H2234.0 V1285.1 H2240.7 V1187.9 H2243.9 V1235.5 H2247.3 V1319.6 H2250.8 V1266.9 H2254.2 V1152.8 H2257.4 V1112.6 H2260.7 V1108.9 H2264.1 V1209.8 H2271.0 V1090.2 H2274.4 V1104.8 H2280.9 V1126.6 H2284.1 V1224.7 H2287.4 V1182.3 H2291.0 V1189.2 H2297.1 V1207.9 H2300.5 V1237.4 H2304.1 V1152.8 H2307.8 V1278.0 H2311.2 V1147.2 H2314.5 V1187.5 H2317.7 V1285.4 H2324.2 V1202.3 H2331.1 V1173.0 H2337.9 V1283.6 H2341.4 V1114.5 H2344.8 V1178.2 H2348.0 V1261.3 H2354.5 V1292.5 H2361.0 V1288.8 H2364.4 V1140.3 H2370.9 V1272.3 H2374.3 V1242.6 H2377.8 V1316.8 H2381.2 V1211.6 H2384.6 V1060.9 H2388.1 V1147.2 H2391.5 V1265.4 H2394.8 V1169.2 H2398.0 V1138.0 H2401.2 V1323.9 H2404.9 V1207.9 H2407.9 V1272.3 H2414.8 V1307.5 H2418.2 V1217.2 H2424.7 V1252.0 H2427.9 V1147.2 H2431.3 V1130.9 H2438.2 V1225.8 H2441.4 V1246.4 H2444.7 V1051.9 H2448.1 V1126.6 H2451.3 V1167.7 H2454.6 V1090.2 H2458.4 V1160.3 H2461.5 V1185.7 H2464.9 V1313.1 H2468.4 V1191.6 H2471.4 V1209.8 H2475.0 V1097.7 H2478.3 V1100.7 H2481.7 V1140.3 H2484.9 V1196.9 H2491.4 V1218.7 H2494.8 V1279.8 H2498.3 V1266.7 H2504.9 V1176.7 H2508.1 V1143.4 H2515.2 V1265.1 H2518.4 V1186.0 H2521.8 V1173.0 H2524.9 V1215.4 H2528.3 V1209.8 H2531.7 V1316.8 H2535.2 V1174.8 H2538.6 V1310.6 H2545.1 V1235.5 H2552.0 V1200.4 H2555.4 V1150.9 H2558.7 V1311.2 H2561.9 V1281.7 H2568.8 V1301.9 H2571.8 V1162.1 H2578.7 V1214.1 H2582.1 V1171.1 H2585.3 V1211.6 H2588.4 V1314.4 H2595.2 V1319.6 H2598.9 V1288.8 H2602.1 V1305.0 H2609.0 V1097.7 H2612.0 V1164.0 H2615.2 V1090.2 H2618.9 V1263.0 H2622.1 V1110.4 H2629.2 V1235.5 H2632.4 V1217.2 H2638.9 V1292.5 H2643.6 V1292.5 H2644" fill="none" stroke="#560080" stroke-width="2.2" />
<line x1="1046.00" y1="1332.00" x2="2645.00" y2="1332.00" stroke="#222" stroke-width="2.2" />
<line x1="1046.00" y1="1331.00" x2="1046.00" y2="1339.50" stroke="#222" stroke-width="2.2" />
<line x1="2644.00" y1="1331.00" x2="2644.00" y2="1339.50" stroke="#222" stroke-width="2.2" />
<line x1="1240.80" y1="1331.00" x2="1240.80" y2="1339.50" stroke="#222" stroke-width="2.2" />
<text x="1240.80" y="1360.80" font-size="20.5" fill="#222" font-weight="normal" text-anchor="middle" >02:00</text>
<line x1="1441.47" y1="1331.00" x2="1441.47" y2="1339.50" stroke="#222" stroke-width="2.2" />
<text x="1441.47" y="1360.80" font-size="20.5" fill="#222" font-weight="normal" text-anchor="middle" >03:00</text>
<line x1="1642.14" y1="1331.00" x2="1642.14" y2="1339.50" stroke="#222" stroke-width="2.2" />
<text x="1642.14" y="1360.80" font-size="20.5" fill="#222" font-weight="normal" text-anchor="middle" >04:00</text>
<line x1="1842.81" y1="1331.00" x2="1842.81" y2="1339.50" stroke="#222" stroke-width="2.2" />
<text x="1842.81" y="1360.80" font-size="20.5" fill="#222" font-weight="normal" text-anchor="middle" >05:00</text>
<line x1="2043.48" y1="1331.00" x2="2043.48" y2="1339.50" stroke="#222" stroke-width="2.2" />
<text x="2043.48" y="1360.80" font-size="20.5" fill="#222" font-weight="normal" text-anchor="middle" >06:00</text>
<line x1="2244.15" y1="1331.00" x2="2244.15" y2="1339.50" stroke="#222" stroke-width="2.2" />
<text x="2244.15" y="1360.80" font-size="20.5" fill="#222" font-weight="normal" text-anchor="middle" >07:00</text>
<line x1="2444.82" y1="1331.00" x2="2444.82" y2="1339.50" stroke="#222" stroke-width="2.2" />
<text x="2444.82" y="1360.80" font-size="20.5" fill="#222" font-weight="normal" text-anchor="middle" >08:00</text>
<rect x="894.30" y="875.10" width="29.20" height="101.30" rx="6" fill="#fff" stroke="#dddddd" stroke-width="1.8" />
<line x1="906.00" y1="888.00" x2="906.00" y2="932.00" stroke="#999" stroke-width="1.8" />
<line x1="911.90" y1="888.00" x2="911.90" y2="932.00" stroke="#999" stroke-width="1.8" />
<rect x="894.30" y="946.30" width="29.20" height="1.80" rx="0" fill="#dddddd" />
<line x1="904.10" y1="957.20" x2="914.80" y2="967.70" stroke="#888" stroke-width="1.3" />
<line x1="914.80" y1="957.20" x2="904.10" y2="967.70" stroke="#888" stroke-width="1.3" />
<rect x="1047.60" y="1381.50" width="60.60" height="60.90" rx="8" fill="#fff" stroke="#dddddd" stroke-width="2" />
<path d="M1074.5,1414 L1081,1407.6 L1081,1420.3 Z" fill="#555"  />
<rect x="1119.60" y="1381.50" width="62.80" height="60.90" rx="8" fill="#fff" stroke="#dddddd" stroke-width="2" />
<rect x="1138.35" y="1399.15" width="25.50" height="25.50" rx="1.5" fill="none" stroke="#999999" stroke-width="1.9" />
<rect x="1137.90" y="1405.80" width="26.50" height="1.90" rx="0" fill="#999999" />
<rect x="1143.00" y="1396.00" width="3.80" height="5.50" rx="0" fill="#999999" />
<rect x="1155.10" y="1396.00" width="3.80" height="5.50" rx="0" fill="#999999" />
<rect x="1153.20" y="1414.00" width="7.80" height="7.80" rx="0" fill="#999999" />
<rect x="1193.70" y="1381.50" width="62.80" height="60.90" rx="8" fill="#fff" stroke="#c9d3dc" stroke-width="2" />
<circle cx="1225.00" cy="1412.00" r="13.00" fill="none" stroke="#999999" stroke-width="2.5" />
<path d="M1225,1404 V1412 H1233" fill="none" stroke="#999999" stroke-width="2.5" />
<rect x="1659.70" y="1381.50" width="60.50" height="60.90" rx="8" fill="#fff" stroke="#dddddd" stroke-width="2" />
<path d="M1675,1398.5 V1429.5 H1706.5" fill="none" stroke="#666" stroke-width="1.8" />
<path d="M1677,1413 Q1683,1404 1692,1404.5 Q1699,1405 1704,1398.5" fill="none" stroke="#555" stroke-width="2.6" />
<path d="M1676,1413.8 H1704" fill="none" stroke="#666" stroke-width="1.6" />
<path d="M1676,1428.5 h3.5 v-4 h5 v-4 h5 v-4 h5 v-3.5 h6" fill="none" stroke="#666" stroke-width="1.6" />
<rect x="1731.40" y="1381.50" width="227.00" height="60.90" rx="8" fill="#efefef" stroke="#dddddd" stroke-width="2" />
<rect x="1896.00" y="1381.50" width="2.00" height="60.90" rx="0" fill="#dddddd" />
<text x="1756.16" y="1423.00" font-size="29" fill="#1f2126" font-weight="normal" textLength="116.07" lengthAdjust="spacingAndGlyphs" >± 8 hours</text>
<rect x="1917.50" y="1412.00" width="21.30" height="15.00" rx="2.5" fill="#222" />
<path d="M1921.5,1412 v-5 a6.6,6.6 0 0 1 13.2,0 v5" fill="none" stroke="#222" stroke-width="3.2" />
<circle cx="1928.10" cy="1419.00" r="2.20" fill="#fff"  />
<rect x="1969.60" y="1381.50" width="60.70" height="60.90" rx="8" fill="#fff" stroke="#dddddd" stroke-width="2" />
<path d="M1989,1412 a11.5,11.5 0 1 1 3.5,8.3" fill="none" stroke="#666" stroke-width="2.5" />
<path d="M1985,1408 L1993,1408 L1989,1414 Z" fill="#666"  />
<path d="M2000,1405 V1413 L2006,1417" fill="none" stroke="#666" stroke-width="2.3" />
<rect x="2444.00" y="1381.50" width="62.40" height="60.90" rx="8" fill="#fff" stroke="#dddddd" stroke-width="2" />
<rect x="2462.45" y="1399.15" width="25.50" height="25.50" rx="1.5" fill="none" stroke="#999999" stroke-width="1.9" />
<rect x="2462.00" y="1405.80" width="26.50" height="1.90" rx="0" fill="#999999" />
<rect x="2467.10" y="1396.00" width="3.80" height="5.50" rx="0" fill="#999999" />
<rect x="2479.20" y="1396.00" width="3.80" height="5.50" rx="0" fill="#999999" />
<rect x="2477.30" y="1414.00" width="7.80" height="7.80" rx="0" fill="#999999" />
<rect x="2517.20" y="1381.50" width="62.30" height="60.90" rx="8" fill="#fff" stroke="#c9d3dc" stroke-width="2" />
<circle cx="2548.30" cy="1412.00" r="13.00" fill="none" stroke="#999999" stroke-width="2.5" />
<path d="M2548.3,1404 V1412 H2556.3" fill="none" stroke="#999999" stroke-width="2.5" />
<rect x="2581.50" y="1381.50" width="61.10" height="60.90" rx="8" fill="#fff" stroke="#dddddd" stroke-width="2" />
<path d="M2615.5,1414 L2609,1407.6 L2609,1420.3 Z" fill="#555"  />
<rect x="1046.60" y="1459.50" width="1595.40" height="84.50" rx="9" fill="#fff" />
<path d="M1055.6,1459.5 H2633 a9,9 0 0 1 9,9 V1520 H1046.6 V1468.5 a9,9 0 0 1 9,-9 z" fill="#f2f2f2"/>
<path d="M1048,1497.3 H1049.7 V1479.3 H1057.2 V1486.9 H1063.7 V1474.7 H1067.5 V1484.6 H1074.2 V1508.5 H1077.4 V1486.6 H1087.1 V1490.9 H1094.2 V1494.2 H1097.0 V1492.8 H1100.7 V1515.4 H1106.9 V1512.6 H1114.2 V1476.9 H1117.0 V1500.1 H1120.7 V1484.9 H1124.1 V1485.9 H1127.4 V1495.3 H1137.1 V1492.8 H1147.0 V1514.1 H1150.6 V1488.6 H1157.3 V1516.3 H1160.5 V1490.5 H1167.4 V1509.5 H1170.8 V1486.2 H1177.7 V1498.2 H1181.0 V1500.1 H1187.2 V1487.2 H1197.5 V1514.6 H1207.6 V1491.2 H1214.1 V1502.8 H1220.8 V1483.6 H1224.4 V1480.3 H1230.9 V1493.6 H1241.2 V1506.8 H1247.4 V1481.3 H1257.6 V1492.6 H1260.8 V1490.5 H1263.8 V1494.2 H1271.1 V1500.9 H1277.8 V1495.9 H1280.6 V1512.4 H1283.8 V1507.8 H1287.5 V1515.3 H1294.1 V1510.1 H1297.8 V1477.6 H1304.7 V1483.6 H1307.7 V1498.2 H1314.1 V1479.9 H1317.8 V1497.4 H1320.8 V1501.1 H1327.7 V1479.5 H1334.8 V1501.4 H1337.4 V1503.5 H1340.8 V1512.5 H1347.7 V1515.4 H1354.3 V1478.0 H1360.8 V1509.7 H1367.9 V1513.1 H1374.5 V1503.1 H1377.6 V1504.4 H1387.9 V1490.9 H1394.4 V1485.9 H1401.0 V1481.3 H1404.7 V1489.6 H1411.3 V1502.1 H1415.0 V1488.6 H1417.8 V1485.0 H1427.7 V1489.9 H1438.0 V1475.3 H1441.2 V1504.1 H1454.8 V1485.6 H1458.0 V1492.8 H1468.2 V1503.8 H1471.4 V1485.6 H1474.8 V1500.5 H1478.1 V1489.6 H1481.7 V1491.5 H1484.7 V1505.8 H1491.6 V1498.5 H1501.5 V1505.8 H1508.4 V1505.1 H1514.9 V1485.3 H1518.3 V1490.8 H1524.8 V1506.1 H1528.4 V1476.6 H1531.4 V1474.3 H1535.5 V1482.6 H1538.3 V1499.4 H1545.2 V1492.6 H1555.1 V1499.4 H1561.6 V1488.6 H1568.2 V1509.1 H1574.7 V1477.3 H1578.1 V1501.1 H1585.0 V1516.7 H1588.7 V1485.3 H1594.9 V1498.4 H1601.8 V1513.1 H1605.2 V1498.2 H1608.7 V1477.3 H1619.2 V1488.3 H1622.0 V1506.5 H1625.2 V1485.0 H1632.1 V1506.5 H1635.5 V1492.8 H1645.6 V1480.9 H1649.0 V1511.7 H1652.3 V1485.2 H1658.9 V1492.2 H1662.4 V1470.7 H1665.8 V1516.3 H1668.9 V1514.3 H1675.5 V1500.4 H1678.8 V1485.9 H1682.2 V1514.8 H1685.4 V1513.7 H1689.1 V1511.4 H1695.7 V1482.5 H1699.0 V1491.2 H1702.2 V1509.5 H1705.9 V1501.4 H1712.5 V1499.4 H1719.0 V1493.5 H1722.4 V1505.4 H1728.9 V1509.1 H1732.5 V1479.0 H1735.8 V1503.8 H1739.2 V1482.5 H1746.1 V1514.0 H1759.2 V1504.4 H1762.5 V1510.1 H1769.1 V1492.5 H1772.3 V1474.7 H1776.0 V1487.6 H1779.2 V1497.2 H1785.9 V1514.1 H1789.1 V1476.3 H1796.0 V1493.7 H1799.3 V1515.1 H1802.7 V1496.8 H1809.2 V1491.5 H1819.5 V1505.4 H1826.1 V1506.5 H1829.2 V1495.8 H1833.0 V1491.5 H1839.5 V1508.7 H1846.0 V1494.5 H1849.4 V1515.1 H1852.6 V1504.1 H1859.5 V1501.1 H1866.2 V1507.8 H1869.8 V1503.8 H1873.1 V1479.3 H1876.3 V1506.5 H1879.7 V1490.9 H1886.2 V1493.7 H1889.4 V1509.5 H1892.7 V1487.8 H1896.1 V1495.9 H1899.8 V1483.9 H1903.0 V1495.9 H1906.4 V1493.8 H1912.9 V1489.2 H1916.1 V1488.9 H1919.5 V1501.1 H1926.4 V1500.7 H1929.6 V1494.5 H1932.8 V1500.8 H1936.2 V1488.9 H1939.5 V1502.1 H1942.7 V1498.1 H1949.6 V1486.2 H1953.0 V1491.3 H1956.3 V1486.9 H1959.5 V1477.9 H1966.4 V1510.7 H1969.8 V1490.2 H1976.3 V1489.9 H1979.7 V1487.2 H1986.2 V1489.9 H1993.1 V1484.9 H1996.5 V1506.0 H2003.0 V1499.2 H2006.6 V1475.3 H2012.7 V1503.8 H2016.5 V1480.3 H2019.8 V1472.9 H2023.4 V1501.7 H2029.9 V1503.8 H2033.3 V1472.4 H2036.5 V1511.4 H2043.2 V1514.3 H2046.4 V1515.7 H2053.3 V1511.4 H2056.3 V1493.2 H2063.2 V1495.3 H2066.5 V1494.9 H2070.1 V1472.6 H2076.8 V1516.8 H2080.0 V1482.5 H2083.7 V1490.3 H2086.5 V1498.2 H2093.4 V1485.9 H2096.8 V1504.5 H2100.0 V1480.9 H2103.7 V1501.7 H2106.7 V1503.8 H2109.5 V1504.8 H2117.0 V1495.8 H2120.2 V1516.7 H2123.5 V1506.0 H2126.7 V1517.1 H2130.4 V1506.8 H2136.6 V1487.2 H2140.3 V1483.2 H2143.5 V1508.1 H2150.6 V1503.1 H2153.8 V1507.7 H2160.3 V1486.9 H2163.7 V1478.4 H2170.2 V1507.7 H2177.1 V1513.4 H2183.7 V1493.8 H2187.0 V1510.2 H2190.2 V1502.8 H2197.1 V1480.0 H2203.3 V1484.2 H2207.0 V1476.9 H2210.3 V1508.7 H2217.2 V1491.5 H2220.5 V1482.3 H2223.7 V1509.1 H2227.1 V1514.1 H2230.8 V1505.8 H2234.0 V1510.1 H2240.7 V1492.6 H2243.9 V1501.1 H2247.3 V1516.3 H2250.8 V1506.8 H2254.2 V1486.2 H2257.4 V1479.0 H2260.7 V1478.3 H2264.1 V1496.5 H2271.0 V1475.0 H2274.4 V1477.6 H2280.9 V1481.5 H2284.1 V1499.2 H2287.4 V1491.5 H2291.0 V1492.8 H2297.1 V1496.2 H2300.5 V1501.5 H2304.1 V1486.2 H2307.8 V1508.8 H2311.2 V1485.2 H2314.5 V1492.5 H2317.7 V1510.1 H2324.2 V1495.1 H2331.1 V1489.9 H2337.9 V1509.8 H2341.4 V1479.3 H2344.8 V1490.8 H2348.0 V1505.8 H2354.5 V1511.4 H2361.0 V1510.7 H2364.4 V1484.0 H2370.9 V1507.8 H2374.3 V1502.4 H2377.8 V1515.8 H2381.2 V1496.8 H2384.6 V1469.7 H2388.1 V1485.2 H2391.5 V1506.5 H2394.8 V1489.2 H2398.0 V1483.6 H2401.2 V1517.1 H2404.9 V1496.2 H2407.9 V1507.8 H2414.8 V1514.1 H2418.2 V1497.8 H2424.7 V1504.1 H2427.9 V1485.2 H2431.3 V1482.3 H2438.2 V1499.4 H2441.4 V1503.1 H2444.7 V1468.1 H2448.1 V1481.5 H2451.3 V1488.9 H2454.6 V1475.0 H2458.4 V1487.6 H2461.5 V1492.2 H2464.9 V1515.1 H2468.4 V1493.2 H2471.4 V1496.5 H2475.0 V1476.3 H2478.3 V1476.8 H2481.7 V1484.0 H2484.9 V1494.2 H2491.4 V1498.1 H2494.8 V1509.1 H2498.3 V1506.8 H2504.9 V1490.5 H2508.1 V1484.5 H2515.2 V1506.5 H2518.4 V1492.2 H2521.8 V1489.9 H2524.9 V1497.5 H2528.3 V1496.5 H2531.7 V1515.8 H2535.2 V1490.2 H2538.6 V1514.7 H2545.1 V1501.1 H2552.0 V1494.8 H2555.4 V1485.9 H2558.7 V1514.8 H2561.9 V1509.5 H2568.8 V1513.1 H2571.8 V1487.9 H2578.7 V1497.3 H2582.1 V1489.5 H2585.3 V1496.8 H2588.4 V1515.3 H2595.2 V1516.3 H2598.9 V1510.7 H2602.1 V1513.7 H2609.0 V1476.3 H2612.0 V1488.3 H2615.2 V1475.0 H2618.9 V1506.1 H2622.1 V1478.6 H2629.2 V1501.1 H2632.4 V1497.8 H2638.9 V1511.4 H2643.6 V1511.4 H2642" fill="none" stroke="#560080" stroke-width="2.3" />
<path d="M1046.0,1469.9 L1083.6,1469.9 L1083.6,1463.0 L1257.5,1463.0 L1257.5,1511.1 L1671.7,1511.1 L1671.7,1504.2 L1872.7,1504.2 L1872.7,1497.4 L2090.0,1497.4 L2090.0,1490.5 L2240.7,1490.5 L2240.7,1483.6 L2451.3,1483.6 L2451.3,1476.8 L2628.3,1476.8 L2628.3,1518.0 L2644.0,1518.0" fill="none" stroke="#ff9e3b" stroke-width="1.8" />
<path d="M1046.1,1488.0 L1050.1,1483.4 L1053.5,1489.2 L1060.0,1480.1 L1063.7,1494.3 L1070.4,1480.1 L1073.8,1489.7 L1076.8,1495.3 L1083.6,1485.3 L1086.7,1495.8 L1090.1,1487.2 L1093.4,1502.4 L1096.8,1495.8 L1100.2,1512.3 L1107.0,1483.6 L1110.3,1494.3 L1113.7,1481.6 L1116.4,1495.3 L1121.2,1497.3 L1125.9,1502.4 L1130.4,1480.4 L1134.0,1495.3 L1143.5,1480.4 L1146.9,1490.9 L1150.7,1486.9 L1153.0,1494.8 L1160.4,1488.5 L1162.4,1495.8 L1170.3,1490.2 L1173.9,1488.0 L1176.0,1497.3 L1180.7,1487.6 L1184.1,1513.2 L1187.1,1485.4 L1190.6,1516.1 L1196.9,1480.4 L1201.0,1495.8 L1207.5,1488.1 L1211.1,1492.3 L1214.5,1489.6 L1217.6,1488.3 L1220.6,1481.7 L1224.0,1495.8 L1229.4,1498.8 L1234.8,1495.3 L1240.2,1502.4 L1243.6,1490.7 L1247.0,1480.1 L1254.2,1509.7 L1257.5,1486.2 L1260.5,1495.8 L1267.9,1485.2 L1270.7,1505.4 L1278.1,1480.1 L1286.2,1495.8 L1287.4,1492.3 L1290.8,1504.8 L1294.3,1489.2 L1297.7,1490.2 L1301.0,1491.2 L1304.4,1485.5 L1307.6,1490.2 L1311.0,1505.2 L1314.2,1495.3 L1317.6,1509.1 L1320.9,1489.9 L1324.3,1508.4 L1327.5,1503.7 L1330.9,1485.8 L1334.1,1480.9 L1337.5,1505.2 L1340.8,1487.7 L1344.1,1498.2 L1347.4,1491.8 L1350.8,1498.5 L1354.0,1489.7 L1357.4,1507.1 L1360.7,1480.9 L1364.0,1500.2 L1367.3,1491.9 L1370.7,1494.5 L1373.9,1497.0 L1377.3,1494.8 L1380.6,1496.4 L1383.9,1489.0 L1387.2,1490.9 L1390.6,1492.8 L1393.8,1499.5 L1397.2,1497.0 L1400.4,1497.6 L1403.8,1490.6 L1407.1,1493.0 L1410.5,1492.5 L1413.7,1489.7 L1417.1,1484.0 L1420.3,1490.5 L1423.7,1493.3 L1427.0,1505.6 L1430.4,1502.5 L1433.6,1508.1 L1437.0,1480.6 L1441.1,1516.8 L1447.8,1480.6 L1451.2,1505.4 L1458.0,1482.9 L1461.4,1500.2 L1464.7,1498.2 L1468.1,1491.0 L1471.5,1487.8 L1474.9,1494.2 L1478.3,1490.7 L1481.7,1489.0 L1485.0,1498.4 L1488.4,1482.1 L1491.8,1483.8 L1494.9,1482.8 L1498.2,1501.4 L1501.5,1507.2 L1504.7,1485.9 L1508.4,1487.2 L1511.7,1497.3 L1515.1,1505.4 L1518.2,1495.6 L1521.6,1491.3 L1525.0,1496.7 L1528.3,1490.5 L1531.7,1480.6 L1535.1,1494.5 L1538.5,1493.3 L1541.9,1480.4 L1548.4,1502.5 L1551.8,1483.8 L1554.7,1480.6 L1557.4,1491.9 L1561.6,1481.1 L1568.3,1506.6 L1571.7,1494.4 L1575.0,1490.3 L1578.4,1481.4 L1581.8,1495.1 L1585.1,1490.9 L1588.5,1497.5 L1591.9,1486.7 L1595.2,1490.5 L1598.6,1480.7 L1602.0,1497.9 L1605.1,1497.7 L1608.7,1486.2 L1612.1,1490.9 L1615.4,1495.2 L1618.8,1480.4 L1622.0,1493.1 L1625.3,1489.5 L1628.7,1493.1 L1632.1,1477.4 L1635.4,1489.8 L1638.8,1487.4 L1642.1,1486.7 L1645.5,1487.0 L1648.7,1503.3 L1652.1,1505.2 L1655.4,1487.2 L1658.8,1494.4 L1662.1,1480.9 L1665.5,1482.3 L1668.9,1487.7 L1672.2,1495.1 L1675.6,1502.6 L1679.0,1491.2 L1682.1,1484.2 L1685.5,1487.3 L1688.9,1480.3 L1692.2,1481.1 L1695.4,1494.7 L1698.8,1491.6 L1702.1,1490.7 L1705.5,1501.5 L1708.9,1476.9 L1712.2,1470.0 L1715.6,1501.9 L1719.0,1502.8 L1722.3,1490.9 L1725.7,1493.3 L1729.1,1515.0 L1732.4,1481.6 L1735.6,1483.8 L1739.0,1501.7 L1742.3,1477.9 L1745.7,1474.8 L1749.1,1504.9 L1752.4,1469.9 L1755.8,1484.6 L1759.2,1490.7 L1762.5,1497.5 L1765.9,1483.2 L1769.3,1493.1 L1772.6,1477.6 L1776.0,1491.9 L1779.3,1491.7 L1782.5,1494.5 L1785.9,1488.8 L1789.3,1497.2 L1792.6,1480.4 L1796.0,1488.4 L1799.3,1488.2 L1802.7,1481.9 L1806.1,1489.8 L1809.4,1486.9 L1812.6,1502.0 L1816.0,1500.1 L1819.3,1487.0 L1822.7,1484.8 L1826.1,1488.6 L1829.4,1501.4 L1832.7,1505.6 L1836.1,1487.2 L1839.4,1504.8 L1842.8,1498.2 L1846.2,1490.3 L1849.3,1487.4 L1852.7,1502.2 L1856.1,1495.1 L1859.4,1483.9 L1862.8,1499.1 L1866.0,1504.5 L1869.3,1495.4 L1872.7,1479.5 L1876.1,1503.3 L1879.4,1501.2 L1882.8,1487.2 L1886.2,1490.0 L1889.5,1475.8 L1892.9,1492.4 L1896.3,1469.9 L1899.4,1487.4 L1902.8,1486.6 L1906.2,1487.4 L1909.5,1472.8 L1912.9,1485.3 L1916.3,1482.3 L1919.4,1498.0 L1922.8,1503.5 L1926.2,1492.6 L1929.5,1493.7 L1932.9,1499.4 L1936.3,1482.3 L1939.6,1492.3 L1943.0,1500.8 L1946.4,1490.8 L1949.7,1494.7 L1953.1,1498.9 L1956.4,1502.1 L1959.6,1492.9 L1963.0,1499.6 L1966.4,1508.5 L1969.7,1505.6 L1973.1,1499.1 L1976.4,1478.3 L1979.8,1484.2 L1983.2,1494.4 L1986.4,1503.8 L1989.7,1471.4 L1993.1,1479.3 L1996.4,1498.7 L1999.8,1486.7 L2003.2,1484.6 L2006.5,1487.4 L2009.9,1490.2 L2013.3,1496.6 L2016.6,1490.9 L2020.0,1477.9 L2023.4,1494.0 L2026.5,1487.4 L2029.9,1501.4 L2033.3,1480.0 L2036.6,1504.2 L2040.0,1476.8 L2043.4,1485.6 L2046.7,1489.7 L2050.1,1490.4 L2053.5,1501.7 L2056.8,1516.4 L2060.2,1495.9 L2063.6,1499.1 L2066.9,1497.8 L2070.1,1482.7 L2073.5,1492.9 L2076.8,1487.4 L2080.2,1505.4 L2083.6,1479.7 L2086.9,1480.0 L2090.3,1476.9 L2093.6,1492.4 L2097.0,1504.0 L2100.3,1484.4 L2103.6,1487.0 L2107.0,1490.2 L2110.2,1501.9 L2113.6,1487.7 L2116.9,1483.7 L2120.3,1473.4 L2123.6,1486.7 L2127.0,1503.6 L2130.4,1478.3 L2133.7,1489.6 L2136.9,1486.0 L2140.3,1511.3 L2143.6,1489.5 L2147.0,1487.9 L2150.4,1492.3 L2153.7,1499.4 L2157.1,1472.1 L2160.5,1487.2 L2163.8,1493.1 L2167.0,1486.8 L2170.4,1500.2 L2173.7,1490.5 L2177.1,1499.3 L2180.5,1478.8 L2183.8,1499.6 L2187.2,1485.1 L2190.6,1494.4 L2193.7,1493.0 L2197.1,1503.8 L2200.5,1506.9 L2203.8,1503.8 L2207.2,1491.9 L2210.6,1491.5 L2213.9,1502.6 L2217.3,1496.5 L2220.5,1500.0 L2223.8,1478.6 L2227.2,1500.3 L2230.6,1489.1 L2233.9,1490.4 L2237.3,1468.0 L2240.7,1484.2 L2244.0,1500.5 L2247.4,1486.3 L2250.6,1482.2 L2253.9,1498.5 L2257.3,1489.3 L2260.7,1492.4 L2264.0,1493.7 L2267.4,1480.4 L2270.7,1492.4 L2274.1,1491.4 L2277.3,1488.3 L2280.7,1491.9 L2284.0,1497.2 L2287.4,1488.2 L2290.7,1486.7 L2294.1,1491.9 L2297.5,1494.4 L2300.8,1488.9 L2304.2,1487.5 L2307.6,1493.7 L2310.7,1503.3 L2314.1,1507.2 L2317.5,1487.1 L2320.8,1489.3 L2324.2,1481.8 L2327.6,1507.5 L2330.9,1497.9 L2334.3,1493.7 L2337.5,1481.2 L2340.8,1485.4 L2344.2,1493.3 L2347.6,1487.7 L2350.9,1496.5 L2354.3,1473.3 L2357.7,1501.4 L2361.0,1489.1 L2364.4,1475.5 L2367.8,1490.2 L2371.2,1487.0 L2374.6,1481.3 L2377.9,1491.7 L2381.1,1494.7 L2384.5,1473.2 L2387.8,1486.6 L2391.2,1474.3 L2394.6,1483.2 L2397.9,1485.1 L2401.3,1490.5 L2404.5,1498.2 L2407.8,1510.2 L2411.2,1499.4 L2414.5,1501.3 L2417.9,1502.6 L2421.3,1482.1 L2424.6,1486.3 L2428.0,1499.5 L2431.2,1495.0 L2434.5,1494.0 L2437.9,1491.3 L2441.3,1497.7 L2444.6,1475.7 L2448.0,1483.8 L2451.4,1484.7 L2454.5,1491.0 L2457.9,1490.5 L2461.3,1496.4 L2464.6,1491.2 L2468.0,1491.9 L2471.3,1488.7 L2474.7,1495.9 L2478.1,1498.5 L2481.4,1486.7 L2484.8,1510.1 L2488.2,1476.0 L2491.5,1506.1 L2494.7,1499.8 L2498.1,1500.6 L2501.4,1502.7 L2504.8,1492.4 L2508.1,1495.4 L2511.5,1489.3 L2514.9,1506.9 L2518.2,1496.1 L2521.4,1487.3 L2524.8,1486.2 L2528.1,1501.6 L2531.5,1486.8 L2534.9,1482.3 L2538.2,1492.6 L2541.6,1488.7 L2544.9,1492.2 L2548.3,1483.9 L2551.7,1495.9 L2554.8,1484.0 L2558.2,1485.3 L2561.6,1490.5 L2564.9,1497.4 L2568.3,1487.3 L2571.7,1483.4 L2575.0,1496.1 L2578.4,1499.2 L2581.7,1510.0 L2585.1,1491.7 L2588.5,1495.2 L2591.8,1483.8 L2595.0,1483.3 L2598.4,1489.9 L2601.7,1487.1 L2605.1,1499.9 L2608.5,1466.3 L2611.8,1494.0 L2615.2,1493.8 L2618.5,1512.4 L2621.9,1481.2 L2625.3,1495.6 L2628.4,1476.3 L2631.8,1487.0 L2635.2,1481.8 L2638.5,1504.1 L2641.9,1474.8 L2644.0,1492.2" fill="none" stroke="#c40060" stroke-width="1.8" />
<rect x="1047.90" y="1460.80" width="1592.80" height="81.90" rx="9" fill="none" stroke="#1e1e1e" stroke-width="2.6" />
<line x1="1047.00" y1="1520.00" x2="2641.50" y2="1520.00" stroke="#1e1e1e" stroke-width="2.6" />
<rect x="1046.60" y="1474.00" width="7.00" height="35.00" rx="2" fill="#1e1e1e" />
<rect x="2634.00" y="1474.50" width="8.00" height="35.50" rx="2" fill="#1e1e1e" />
<rect x="1840.00" y="1526.70" width="3.50" height="10.70" rx="0" fill="#999" />
<rect x="1847.00" y="1526.70" width="3.50" height="10.70" rx="0" fill="#999" />
<line x1="1046.00" y1="1548.00" x2="2645.00" y2="1548.00" stroke="#222" stroke-width="2.2" />
<line x1="1046.00" y1="1547.00" x2="1046.00" y2="1555.00" stroke="#222" stroke-width="2.2" />
<line x1="2644.00" y1="1547.00" x2="2644.00" y2="1555.00" stroke="#222" stroke-width="2.2" />
<line x1="1240.80" y1="1547.00" x2="1240.80" y2="1555.00" stroke="#222" stroke-width="2.2" />
<text x="1240.80" y="1575.60" font-size="20.5" fill="#222" font-weight="normal" text-anchor="middle" >02:00</text>
<line x1="1441.47" y1="1547.00" x2="1441.47" y2="1555.00" stroke="#222" stroke-width="2.2" />
<text x="1441.47" y="1575.60" font-size="20.5" fill="#222" font-weight="normal" text-anchor="middle" >03:00</text>
<line x1="1642.14" y1="1547.00" x2="1642.14" y2="1555.00" stroke="#222" stroke-width="2.2" />
<text x="1642.14" y="1575.60" font-size="20.5" fill="#222" font-weight="normal" text-anchor="middle" >04:00</text>
<line x1="1842.81" y1="1547.00" x2="1842.81" y2="1555.00" stroke="#222" stroke-width="2.2" />
<text x="1842.81" y="1575.60" font-size="20.5" fill="#222" font-weight="normal" text-anchor="middle" >05:00</text>
<line x1="2043.48" y1="1547.00" x2="2043.48" y2="1555.00" stroke="#222" stroke-width="2.2" />
<text x="2043.48" y="1575.60" font-size="20.5" fill="#222" font-weight="normal" text-anchor="middle" >06:00</text>
<line x1="2244.15" y1="1547.00" x2="2244.15" y2="1555.00" stroke="#222" stroke-width="2.2" />
<text x="2244.15" y="1575.60" font-size="20.5" fill="#222" font-weight="normal" text-anchor="middle" >07:00</text>
<line x1="2444.82" y1="1547.00" x2="2444.82" y2="1555.00" stroke="#222" stroke-width="2.2" />
<text x="2444.82" y="1575.60" font-size="20.5" fill="#222" font-weight="normal" text-anchor="middle" >08:00</text>
<rect x="1047.60" y="1597.80" width="486.40" height="44.20" rx="8" fill="#fff" stroke="#dddddd" stroke-width="2" />
<rect x="1111.60" y="1597.80" width="2.00" height="44.20" rx="0" fill="#dddddd" />
<rect x="1184.80" y="1597.80" width="2.00" height="44.20" rx="0" fill="#dddddd" />
<rect x="1254.60" y="1597.80" width="2.00" height="44.20" rx="0" fill="#dddddd" />
<rect x="1325.40" y="1597.80" width="2.00" height="44.20" rx="0" fill="#dddddd" />
<rect x="1395.60" y="1597.80" width="2.00" height="44.20" rx="0" fill="#dddddd" />
<rect x="1458.50" y="1597.80" width="2.00" height="44.20" rx="0" fill="#dddddd" />
<text x="1063.79" y="1629.30" font-size="25" fill="#1f2126" font-weight="normal" textLength="33.00" lengthAdjust="spacingAndGlyphs" >1D</text>
<text x="1130.66" y="1629.30" font-size="25" fill="#1f2126" font-weight="normal" textLength="37.39" lengthAdjust="spacingAndGlyphs" >1W</text>
<text x="1203.07" y="1629.30" font-size="25" fill="#1f2126" font-weight="normal" textLength="36.34" lengthAdjust="spacingAndGlyphs" >1M</text>
<text x="1273.40" y="1629.30" font-size="25" fill="#1f2126" font-weight="normal" textLength="37.05" lengthAdjust="spacingAndGlyphs" >3M</text>
<text x="1343.27" y="1629.30" font-size="25" fill="#1f2126" font-weight="normal" textLength="36.86" lengthAdjust="spacingAndGlyphs" >6M</text>
<text x="1413.34" y="1629.30" font-size="25" fill="#1f2126" font-weight="normal" textLength="28.96" lengthAdjust="spacingAndGlyphs" >1Y</text>
<text x="1477.00" y="1629.30" font-size="25" fill="#1f2126" font-weight="normal" textLength="40.50" lengthAdjust="spacingAndGlyphs" >ALL</text>
<rect x="1570.00" y="1597.80" width="203.00" height="44.20" rx="8" fill="#fff" stroke="#dddddd" stroke-width="2" />
<rect x="1570.00" y="1597.80" width="157.60" height="44.20" rx="0" fill="#eef4fa" />
<rect x="1726.60" y="1597.80" width="2.00" height="44.20" rx="0" fill="#dddddd" />
<text x="1584.81" y="1629.30" font-size="25" fill="#065cb9" font-weight="normal" textLength="102.73" lengthAdjust="spacingAndGlyphs" >CUSTOM</text>
<path d="M1698.5,1625.5 L1715,1625.5 L1706.75,1617.5 Z" fill="#999"  />
<rect x="1741.60" y="1609.20" width="19.50" height="20.60" rx="2" fill="none" stroke="#333" stroke-width="2.4" />
<circle cx="1745.00" cy="1619.50" r="1.20" fill="#333"  />
<circle cx="1757.50" cy="1619.50" r="1.20" fill="#333"  />
<circle cx="1751.30" cy="1613.00" r="1.20" fill="#333"  />
<circle cx="1751.30" cy="1626.00" r="1.20" fill="#333"  />
<path d="M787.30,367.20 H777.80 V378.20" fill="none" stroke="#7000ff" stroke-width="3.8" stroke-linecap="square" stroke-linejoin="miter"/>
<path d="M824.40,367.20 H833.90 V378.20" fill="none" stroke="#7000ff" stroke-width="3.8" stroke-linecap="square" stroke-linejoin="miter"/>
<path d="M787.30,439.90 H777.80 V428.90" fill="none" stroke="#7000ff" stroke-width="3.8" stroke-linecap="square" stroke-linejoin="miter"/>
<path d="M824.40,439.90 H833.90 V428.90" fill="none" stroke="#7000ff" stroke-width="3.8" stroke-linecap="square" stroke-linejoin="miter"/>
<line x1="794.60" y1="367.20" x2="817.10" y2="367.20" stroke="#7000ff" stroke-width="3.8" />
<line x1="794.60" y1="439.90" x2="817.10" y2="439.90" stroke="#7000ff" stroke-width="3.8" />
<line x1="777.80" y1="390.05" x2="777.80" y2="417.05" stroke="#7000ff" stroke-width="3.8" />
<line x1="833.90" y1="390.05" x2="833.90" y2="417.05" stroke="#7000ff" stroke-width="3.8" />
<path d="M841.50,484.00 H832.00 V495.00" fill="none" stroke="#7000ff" stroke-width="3.8" stroke-linecap="square" stroke-linejoin="miter"/>
<path d="M878.80,484.00 H888.30 V495.00" fill="none" stroke="#7000ff" stroke-width="3.8" stroke-linecap="square" stroke-linejoin="miter"/>
<path d="M841.50,558.00 H832.00 V547.00" fill="none" stroke="#7000ff" stroke-width="3.8" stroke-linecap="square" stroke-linejoin="miter"/>
<path d="M878.80,558.00 H888.30 V547.00" fill="none" stroke="#7000ff" stroke-width="3.8" stroke-linecap="square" stroke-linejoin="miter"/>
<line x1="848.90" y1="484.00" x2="871.40" y2="484.00" stroke="#7000ff" stroke-width="3.8" />
<line x1="848.90" y1="558.00" x2="871.40" y2="558.00" stroke="#7000ff" stroke-width="3.8" />
<line x1="832.00" y1="507.50" x2="832.00" y2="534.50" stroke="#7000ff" stroke-width="3.8" />
<line x1="888.30" y1="507.50" x2="888.30" y2="534.50" stroke="#7000ff" stroke-width="3.8" />
<rect x="1006.00" y="368.00" width="594.00" height="58.50" rx="11" fill="#fff" stroke="#7000ff" stroke-width="4" />
<text x="1106.39" y="410.30" font-size="33.5" fill="#7000ff" font-weight="bold" textLength="391.84" lengthAdjust="spacingAndGlyphs" >Add/Remove tag from view</text>
<line x1="834.00" y1="402.00" x2="1005.00" y2="402.00" stroke="#7000ff" stroke-width="3.2" />
<path d="M849.8,388 L834,402 L849.8,415.7" fill="none" stroke="#7000ff" stroke-width="3.6" />
<rect x="1006.00" y="491.00" width="321.50" height="57.50" rx="11" fill="#fff" stroke="#7000ff" stroke-width="4" />
<text x="1023.75" y="532.80" font-size="33.5" fill="#7000ff" font-weight="bold" textLength="287.42" lengthAdjust="spacingAndGlyphs" >Delete imported tag</text>
<line x1="888.00" y1="519.00" x2="1005.00" y2="519.00" stroke="#7000ff" stroke-width="3.2" />
<path d="M903.5,505 L888,519 L903.5,532.7" fill="none" stroke="#7000ff" stroke-width="3.6" /></svg></body></html>
